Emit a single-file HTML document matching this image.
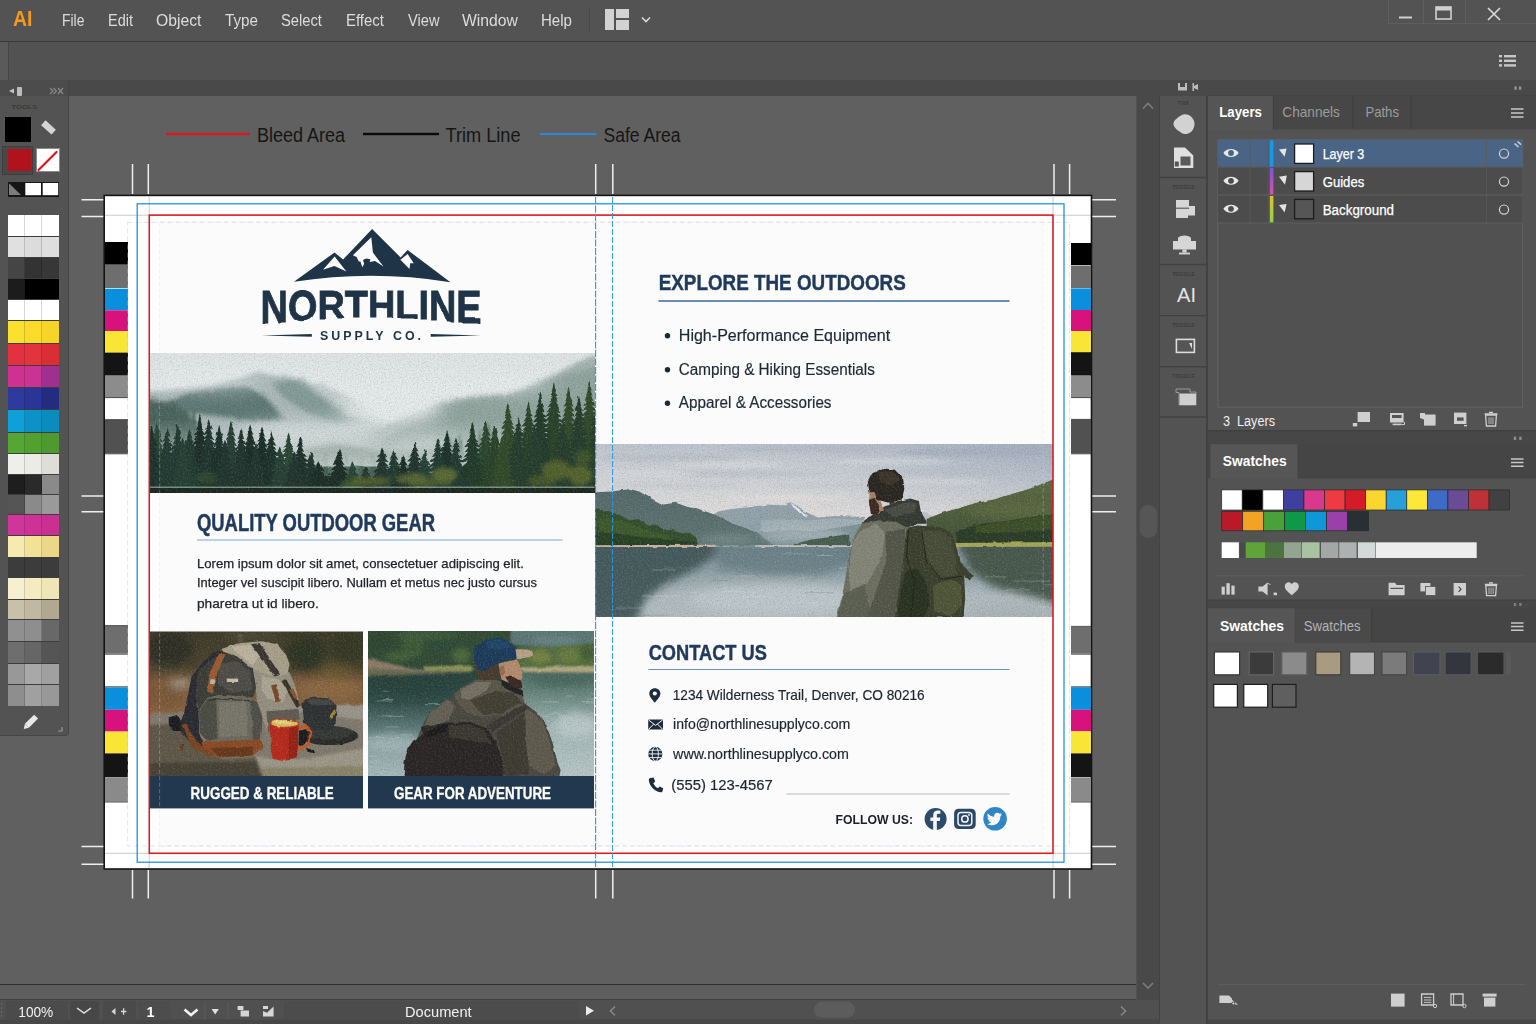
<!DOCTYPE html>
<html lang="en"><head><meta charset="utf-8"><title>Northline Supply Co. - Document</title>
<style>
html,body{margin:0;padding:0}
body{width:1536px;height:1024px;position:relative;overflow:hidden;background:#606060;font-family:"Liberation Sans",sans-serif}
.a{position:absolute}
.t{position:absolute;white-space:nowrap;line-height:1;transform-origin:0 50%}
svg{position:absolute;overflow:visible}
svg text{font-family:"Liberation Sans",sans-serif}
#menubar{left:0;top:0;width:1536px;height:41px;background:#535353}
#ctrlbar{left:0;top:41px;width:1536px;height:39px;background:#525252;border-top:1px solid #3a3a3a;box-sizing:border-box}
#tabstrip{left:0;top:80px;width:1536px;height:16px;background:#494949}
#canvas{left:69px;top:96px;width:1067px;height:888px;background:#606060;overflow:hidden}
#tools{left:0;top:80px;width:69px;height:656px;background:#535353;border-right:1px solid #464646;border-bottom:1px solid #454545;border-radius:0 0 4px 0;box-sizing:border-box}
#leftgutter{left:0;top:736px;width:69px;height:248px;background:#606060}
.sw{position:absolute}
</style></head><body>
<div id="menubar" class="a">
<span class="t" style="left:13.00px;top:8.08px;font-size:22px;color:#f7991c;font-weight:bold;transform:scaleX(0.8864);">AI</span>
<span class="t" style="left:62.00px;top:11.60px;font-size:16.3px;color:#ddd;transform:scaleX(0.8528);">File</span>
<span class="t" style="left:108.00px;top:11.60px;font-size:16.3px;color:#ddd;transform:scaleX(0.8901);">Edit</span>
<span class="t" style="left:156.00px;top:11.60px;font-size:16.3px;color:#ddd;transform:scaleX(0.9658);">Object</span>
<span class="t" style="left:225.00px;top:11.60px;font-size:16.3px;color:#ddd;transform:scaleX(0.9338);">Type</span>
<span class="t" style="left:281.00px;top:11.60px;font-size:16.3px;color:#ddd;transform:scaleX(0.9050);">Select</span>
<span class="t" style="left:346.00px;top:11.60px;font-size:16.3px;color:#ddd;transform:scaleX(0.9183);">Effect</span>
<span class="t" style="left:407.50px;top:11.60px;font-size:16.3px;color:#ddd;transform:scaleX(0.8991);">View</span>
<span class="t" style="left:462.00px;top:11.60px;font-size:16.3px;color:#ddd;transform:scaleX(0.9660);">Window</span>
<span class="t" style="left:541.00px;top:11.60px;font-size:16.3px;color:#ddd;transform:scaleX(0.9247);">Help</span>
<div class="a" style="left:589px;top:7px;width:1px;height:27px;background:#4a4a4a"></div>
<svg style="left:605px;top:9px" width="50" height="22" viewBox="0 0 50 22">
<rect x="0" y="0" width="9" height="21" fill="#d2d2d2"/><rect x="11" y="0" width="13" height="9" fill="#d2d2d2"/><rect x="11" y="11" width="13" height="10" fill="#d2d2d2"/>
<path d="M37 8.5 L41 12.5 L45 8.5" fill="none" stroke="#d8d8d8" stroke-width="1.6"/></svg>
<div class="a" style="left:1388px;top:0;width:148px;height:24px;border:1px solid #5e5e5e;border-top:none;border-right:none;box-sizing:border-box"></div>
<div class="a" style="left:1423px;top:0;width:1px;height:24px;background:#5e5e5e"></div>
<div class="a" style="left:1465px;top:0;width:1px;height:24px;background:#5e5e5e"></div>
<svg style="left:1388px;top:0" width="148" height="24" viewBox="0 0 148 24">
<rect x="11" y="16.5" width="13" height="2" fill="#d0d0d0"/>
<rect x="48" y="7" width="15" height="12" fill="none" stroke="#d0d0d0" stroke-width="1.6"/><rect x="48" y="7" width="15" height="3.5" fill="#d0d0d0"/>
<path d="M100 8 L112 20 M112 8 L100 20" stroke="#d8d8d8" stroke-width="1.7"/></svg>
</div>
<div id="ctrlbar" class="a">
<div class="a" style="left:0;top:0;width:8px;height:38px;background:#5a5a5a;border-right:1px solid #454545"></div>
<svg style="left:1499px;top:13px" width="18" height="12" viewBox="0 0 18 12"><g fill="#c8c8c8"><rect x="0" y="0" width="3" height="2.4"/><rect x="5" y="0" width="12" height="2.4"/><rect x="0" y="4.6" width="3" height="2.4"/><rect x="5" y="4.6" width="12" height="2.4"/><rect x="0" y="9.2" width="3" height="2.4"/><rect x="5" y="9.2" width="12" height="2.4"/></g></svg>
</div>
<div id="tabstrip" class="a"></div>
<div id="leftgutter" class="a"></div>
<div id="tools" class="a">
<div class="a" style="left:0;top:0;width:68px;height:16px;background:#4c4c4c"></div>
<svg style="left:0;top:0" width="69" height="40" viewBox="0 0 69 40">
<path d="M9 11 L14 8.5 L14 13.5 Z" fill="#c4c4c4"/><rect x="17" y="7" width="5" height="9" rx="1" fill="#bdbdbd"/>
<path d="M50 8 L53 11 L50 14 M53.5 8 L56.5 11 L53.5 14" stroke="#8a8a8a" stroke-width="1.2" fill="none"/><path d="M58 8 L63 14 M63 8 L58 14" stroke="#8a8a8a" stroke-width="1.2"/>
<text x="11.5" y="28.6" font-size="5.6" font-weight="bold" fill="#3b3b3b" textLength="26" lengthAdjust="spacingAndGlyphs">TOOLS</text>
</svg>
<div class="a" style="left:4.8px;top:37px;width:26.4px;height:25px;background:#000"></div>
<svg style="left:38px;top:38px" width="20" height="20" viewBox="0 0 20 20"><rect x="3" y="6" width="14" height="6.5" fill="#d4d4d4" transform="rotate(42 10 10)"/></svg>
<div class="a" style="left:2px;top:66px;width:31px;height:29px;background:#484848;border:1px solid #3e3e3e;box-sizing:border-box"></div>
<div class="a" style="left:7.5px;top:69.2px;width:23px;height:22px;background:#b0131e"></div>
<div class="a" style="left:35.5px;top:67.6px;width:24px;height:24.6px;background:#fff;border:1px solid #8a8a8a;box-sizing:border-box"></div>
<svg style="left:35.5px;top:67.6px" width="24" height="24.6" viewBox="0 0 24 24.6"><path d="M2.5 22 L20.5 4" stroke="#e0121e" stroke-width="2.2" stroke-linecap="round"/></svg>
<div class="a" style="left:8px;top:102.4px;width:51px;height:14.2px;background:#151515"></div>
<svg style="left:8px;top:102.4px" width="51" height="14.2" viewBox="0 0 51 14.2"><path d="M1 1.2 L1 13 L13 13 Z" fill="#7c7c7c"/><rect x="17.3" y="1" width="15.7" height="12.2" fill="#fff"/><rect x="34.7" y="1" width="15.5" height="12.2" fill="#fff"/></svg>
<div class="a" style="left:8px;top:135px;width:51px;height:491px;background:#3d3d3d"></div>
<div class="sw" style="left:8px;top:135px;width:17px;height:21px;background:#fff;box-shadow:inset -1px 0 rgba(0,0,0,.16)"></div><div class="sw" style="left:25px;top:135px;width:17px;height:21px;background:#fff;box-shadow:inset -1px 0 rgba(0,0,0,.16)"></div><div class="sw" style="left:42px;top:135px;width:17px;height:21px;background:#fff;"></div><div class="sw" style="left:8px;top:157px;width:17px;height:20px;background:#e0e0e0;box-shadow:inset -1px 0 rgba(0,0,0,.16)"></div><div class="sw" style="left:25px;top:157px;width:17px;height:20px;background:#dcdcdc;box-shadow:inset -1px 0 rgba(0,0,0,.16)"></div><div class="sw" style="left:42px;top:157px;width:17px;height:20px;background:#dedede;"></div><div class="sw" style="left:8px;top:178px;width:17px;height:20px;background:#454545;box-shadow:inset -1px 0 rgba(0,0,0,.16)"></div><div class="sw" style="left:25px;top:178px;width:17px;height:20px;background:#333;box-shadow:inset -1px 0 rgba(0,0,0,.16)"></div><div class="sw" style="left:42px;top:178px;width:17px;height:20px;background:#373737;"></div><div class="sw" style="left:8px;top:199px;width:17px;height:20px;background:#1c1c1c;box-shadow:inset -1px 0 rgba(0,0,0,.16)"></div><div class="sw" style="left:25px;top:199px;width:17px;height:20px;background:#000;box-shadow:inset -1px 0 rgba(0,0,0,.16)"></div><div class="sw" style="left:42px;top:199px;width:17px;height:20px;background:#000;"></div><div class="sw" style="left:8px;top:220px;width:17px;height:20px;background:#fff;box-shadow:inset -1px 0 rgba(0,0,0,.16)"></div><div class="sw" style="left:25px;top:220px;width:17px;height:20px;background:#fff;box-shadow:inset -1px 0 rgba(0,0,0,.16)"></div><div class="sw" style="left:42px;top:220px;width:17px;height:20px;background:#fff;"></div><div class="sw" style="left:8px;top:241px;width:17px;height:22px;background:#fbe12e;box-shadow:inset -1px 0 rgba(0,0,0,.16)"></div><div class="sw" style="left:25px;top:241px;width:17px;height:22px;background:#fbdc2a;box-shadow:inset -1px 0 rgba(0,0,0,.16)"></div><div class="sw" style="left:42px;top:241px;width:17px;height:22px;background:#f8d428;"></div><div class="sw" style="left:8px;top:264px;width:17px;height:21px;background:#e23140;box-shadow:inset -1px 0 rgba(0,0,0,.16)"></div><div class="sw" style="left:25px;top:264px;width:17px;height:21px;background:#e2343c;box-shadow:inset -1px 0 rgba(0,0,0,.16)"></div><div class="sw" style="left:42px;top:264px;width:17px;height:21px;background:#d92e34;"></div><div class="sw" style="left:8px;top:286px;width:17px;height:21px;background:#cf3190;box-shadow:inset -1px 0 rgba(0,0,0,.16)"></div><div class="sw" style="left:25px;top:286px;width:17px;height:21px;background:#c93492;box-shadow:inset -1px 0 rgba(0,0,0,.16)"></div><div class="sw" style="left:42px;top:286px;width:17px;height:21px;background:#a03090;"></div><div class="sw" style="left:8px;top:308px;width:17px;height:21px;background:#2f3a9e;box-shadow:inset -1px 0 rgba(0,0,0,.16)"></div><div class="sw" style="left:25px;top:308px;width:17px;height:21px;background:#2a3596;box-shadow:inset -1px 0 rgba(0,0,0,.16)"></div><div class="sw" style="left:42px;top:308px;width:17px;height:21px;background:#232c80;"></div><div class="sw" style="left:8px;top:330px;width:17px;height:22px;background:#0fa0d8;box-shadow:inset -1px 0 rgba(0,0,0,.16)"></div><div class="sw" style="left:25px;top:330px;width:17px;height:22px;background:#0d92c8;box-shadow:inset -1px 0 rgba(0,0,0,.16)"></div><div class="sw" style="left:42px;top:330px;width:17px;height:22px;background:#0c8cbc;"></div><div class="sw" style="left:8px;top:353px;width:17px;height:20px;background:#55a632;box-shadow:inset -1px 0 rgba(0,0,0,.16)"></div><div class="sw" style="left:25px;top:353px;width:17px;height:20px;background:#52a030;box-shadow:inset -1px 0 rgba(0,0,0,.16)"></div><div class="sw" style="left:42px;top:353px;width:17px;height:20px;background:#4e9a30;"></div><div class="sw" style="left:8px;top:374px;width:17px;height:20px;background:#eeeeea;box-shadow:inset -1px 0 rgba(0,0,0,.16)"></div><div class="sw" style="left:25px;top:374px;width:17px;height:20px;background:#ecece6;box-shadow:inset -1px 0 rgba(0,0,0,.16)"></div><div class="sw" style="left:42px;top:374px;width:17px;height:20px;background:#deded6;"></div><div class="sw" style="left:8px;top:395px;width:17px;height:19px;background:#1e1e1e;box-shadow:inset -1px 0 rgba(0,0,0,.16)"></div><div class="sw" style="left:25px;top:395px;width:17px;height:19px;background:#2a2a2a;box-shadow:inset -1px 0 rgba(0,0,0,.16)"></div><div class="sw" style="left:42px;top:395px;width:17px;height:19px;background:#8a8a8a;"></div><div class="sw" style="left:8px;top:415px;width:17px;height:19px;background:#555;box-shadow:inset -1px 0 rgba(0,0,0,.16)"></div><div class="sw" style="left:25px;top:415px;width:17px;height:19px;background:#8a8a8a;box-shadow:inset -1px 0 rgba(0,0,0,.16)"></div><div class="sw" style="left:42px;top:415px;width:17px;height:19px;background:#9a9a9a;"></div><div class="sw" style="left:8px;top:435px;width:17px;height:20px;background:#d0359a;box-shadow:inset -1px 0 rgba(0,0,0,.16)"></div><div class="sw" style="left:25px;top:435px;width:17px;height:20px;background:#cf3296;box-shadow:inset -1px 0 rgba(0,0,0,.16)"></div><div class="sw" style="left:42px;top:435px;width:17px;height:20px;background:#c93092;"></div><div class="sw" style="left:8px;top:456px;width:17px;height:21px;background:#f6eab0;box-shadow:inset -1px 0 rgba(0,0,0,.16)"></div><div class="sw" style="left:25px;top:456px;width:17px;height:21px;background:#f2e298;box-shadow:inset -1px 0 rgba(0,0,0,.16)"></div><div class="sw" style="left:42px;top:456px;width:17px;height:21px;background:#ead888;"></div><div class="sw" style="left:8px;top:478px;width:17px;height:19px;background:#3c3c3c;box-shadow:inset -1px 0 rgba(0,0,0,.16)"></div><div class="sw" style="left:25px;top:478px;width:17px;height:19px;background:#3c3c3c;box-shadow:inset -1px 0 rgba(0,0,0,.16)"></div><div class="sw" style="left:42px;top:478px;width:17px;height:19px;background:#3c3c3c;"></div><div class="sw" style="left:8px;top:498px;width:17px;height:21px;background:#f6f0d0;box-shadow:inset -1px 0 rgba(0,0,0,.16)"></div><div class="sw" style="left:25px;top:498px;width:17px;height:21px;background:#f4ecc0;box-shadow:inset -1px 0 rgba(0,0,0,.16)"></div><div class="sw" style="left:42px;top:498px;width:17px;height:21px;background:#efe6b8;"></div><div class="sw" style="left:8px;top:520px;width:17px;height:19px;background:#c8c0a8;box-shadow:inset -1px 0 rgba(0,0,0,.16)"></div><div class="sw" style="left:25px;top:520px;width:17px;height:19px;background:#c0b8a0;box-shadow:inset -1px 0 rgba(0,0,0,.16)"></div><div class="sw" style="left:42px;top:520px;width:17px;height:19px;background:#b0a890;"></div><div class="sw" style="left:8px;top:540px;width:17px;height:21px;background:#909090;box-shadow:inset -1px 0 rgba(0,0,0,.16)"></div><div class="sw" style="left:25px;top:540px;width:17px;height:21px;background:#8e8e8e;box-shadow:inset -1px 0 rgba(0,0,0,.16)"></div><div class="sw" style="left:42px;top:540px;width:17px;height:21px;background:#686868;"></div><div class="sw" style="left:8px;top:562px;width:17px;height:21px;background:#6e6e6e;box-shadow:inset -1px 0 rgba(0,0,0,.16)"></div><div class="sw" style="left:25px;top:562px;width:17px;height:21px;background:#666;box-shadow:inset -1px 0 rgba(0,0,0,.16)"></div><div class="sw" style="left:42px;top:562px;width:17px;height:21px;background:#555;"></div><div class="sw" style="left:8px;top:584px;width:17px;height:20px;background:#989898;box-shadow:inset -1px 0 rgba(0,0,0,.16)"></div><div class="sw" style="left:25px;top:584px;width:17px;height:20px;background:#a8a8a8;box-shadow:inset -1px 0 rgba(0,0,0,.16)"></div><div class="sw" style="left:42px;top:584px;width:17px;height:20px;background:#a0a0a0;"></div><div class="sw" style="left:8px;top:605px;width:17px;height:21px;background:#8e8e8e;box-shadow:inset -1px 0 rgba(0,0,0,.16)"></div><div class="sw" style="left:25px;top:605px;width:17px;height:21px;background:#a0a0a0;box-shadow:inset -1px 0 rgba(0,0,0,.16)"></div><div class="sw" style="left:42px;top:605px;width:17px;height:21px;background:#989898;"></div>
<svg style="left:22px;top:630px" width="46" height="24" viewBox="0 0 46 24"><g transform="rotate(-45 10 11)"><rect x="3" y="8" width="13" height="5.6" fill="#e8e8e8"/><path d="M3 8 L-1.5 10.8 L3 13.6 Z" fill="#e8e8e8"/></g><path d="M40 17 L40 21 L36 21" stroke="#9a9a9a" stroke-width="1.2" fill="none"/></svg>
</div>
<div id="canvas" class="a">
<svg style="left:-69px;top:-96px" width="1536" height="1024" viewBox="0 0 1536 1024">
<defs>
<clipPath id="cpF"><rect x="150" y="353" width="445" height="140"/></clipPath>
<clipPath id="cpL"><rect x="595.5" y="444.5" width="457" height="172.5"/></clipPath>
<clipPath id="cpB"><rect x="150" y="631.5" width="213" height="145"/></clipPath>
<clipPath id="cpM"><rect x="368" y="631.5" width="226" height="145"/></clipPath>
<filter id="organic" filterUnits="userSpaceOnUse" x="140" y="340" width="930" height="450" color-interpolation-filters="sRGB">
<feTurbulence type="fractalNoise" baseFrequency="0.11" numOctaves="2" seed="4" result="t"/>
<feDisplacementMap in="SourceGraphic" in2="t" scale="3" xChannelSelector="R" yChannelSelector="G" result="d"/>
<feTurbulence type="fractalNoise" baseFrequency="0.75" numOctaves="2" seed="9" result="g"/>
<feColorMatrix in="g" type="matrix" values="0 0 0 0 0  0 0 0 0 0  0 0 0 0 0  .2 .2 0 0 -.178" result="ga"/>
<feComposite in="ga" in2="d" operator="in" result="gd"/>
<feTurbulence type="fractalNoise" baseFrequency="0.6" numOctaves="2" seed="23" result="g2"/>
<feColorMatrix in="g2" type="matrix" values="0 0 0 0 1  0 0 0 0 1  0 0 0 0 1  .2 .2 0 0 -.186" result="gb"/>
<feComposite in="gb" in2="d" operator="in" result="gl"/>
<feMerge><feMergeNode in="d"/><feMergeNode in="gd"/><feMergeNode in="gl"/></feMerge>
</filter>
<filter id="b05" x="-5%" y="-5%" width="110%" height="110%"><feGaussianBlur stdDeviation=".55"/></filter>
<filter id="b1" x="-10%" y="-10%" width="120%" height="120%"><feGaussianBlur stdDeviation="1"/></filter>
<filter id="b2" x="-10%" y="-10%" width="120%" height="120%"><feGaussianBlur stdDeviation="2.2"/></filter>
<filter id="b4" x="-20%" y="-20%" width="140%" height="140%"><feGaussianBlur stdDeviation="4.5"/></filter>
<filter id="b8" x="-30%" y="-30%" width="160%" height="160%"><feGaussianBlur stdDeviation="9"/></filter>
</defs>
<!-- legend -->
<g id="legend">
<rect x="166" y="132.8" width="84" height="2.4" fill="#d61a22"/>
<rect x="363" y="132.8" width="76" height="2.4" fill="#0a0a0a"/>
<rect x="540" y="133" width="56.5" height="2" fill="#2a86d8"/>
<text x="257.00" y="141.50" font-size="19.5" fill="#161616" textLength="88.00" lengthAdjust="spacingAndGlyphs" >Bleed Area</text>
<text x="445.50" y="141.50" font-size="19.5" fill="#161616" textLength="75.00" lengthAdjust="spacingAndGlyphs" >Trim Line</text>
<text x="603.50" y="141.50" font-size="19.5" fill="#161616" textLength="77.00" lengthAdjust="spacingAndGlyphs" >Safe Area</text>
</g>
<!-- crop marks -->
<g id="cropmarks" stroke="#eeeeee" stroke-width="1.5">
<path d="M132.5 164V194 M148.3 164V194 M595.7 164V194 M612.8 164V194 M1054 164V194 M1069.6 164V194"/>
<path d="M132.5 870V898.5 M148.3 870V898.5 M595.7 870V898.5 M612.8 870V898.5 M1054 870V898.5 M1069.6 870V898.5"/>
<path d="M81.5 199.8H104 M81.5 216.5H104 M81.5 496H104 M81.5 511.7H104 M81.5 846.5H104 M81.5 864.3H104"/>
<path d="M1092 199.8H1116 M1092 216.5H1116 M1092 496H1116 M1092 511.7H1116 M1092 846.5H1116 M1092 864.3H1116"/>
</g>
<!-- artboard -->
<rect x="104" y="195" width="988" height="874" fill="none"/>
<rect x="104.2" y="195.4" width="987.3" height="673.6" fill="#ffffff" stroke="#141414" stroke-width="1.6"/>
<rect x="128" y="222" width="942" height="624" fill="#fefefe"/>
<rect x="160" y="222.5" width="883" height="623.5" fill="#fbfbfb"/>
<!-- colour bars -->
<g id="barL">
<rect x="105" y="242.0" width="23" height="22.0" fill="#000"/><rect x="105" y="265.0" width="23" height="23.0" fill="#6e6e6e"/><rect x="105" y="288.7" width="23" height="21.6" fill="#0a8fdc"/><rect x="105" y="310.3" width="23" height="20.7" fill="#d8127c"/><rect x="105" y="331.0" width="23" height="21.6" fill="#f9e534"/><rect x="105" y="352.6" width="23" height="23.0" fill="#141414"/><rect x="105" y="376.0" width="23" height="21.4" fill="#8c8c8c"/><rect x="105" y="420.0" width="23" height="33.4" fill="#515151"/><rect x="105" y="626.0" width="23" height="27.6" fill="#6e6e6e"/><rect x="105" y="687.4" width="23" height="22.4" fill="#0a8fdc"/><rect x="105" y="709.8" width="23" height="21.8" fill="#d8127c"/><rect x="105" y="731.6" width="23" height="21.8" fill="#f9e534"/><rect x="105" y="753.4" width="23" height="24.0" fill="#141414"/><rect x="105" y="777.8" width="23" height="23.8" fill="#8a8a8a"/>
<path d="M105 264.5H128 M105 397.6H128 M105 419.6H128 M105 453.8H128 M105 625.6H128 M105 654.2H128 M105 686.8H128 M105 802H128" stroke="#222" stroke-width=".8"/>
</g>
<g id="barR">
<rect x="1071" y="243.0" width="20" height="22.0" fill="#000"/><rect x="1071" y="265.5" width="20" height="22.5" fill="#6e6e6e"/><rect x="1071" y="288.4" width="20" height="21.6" fill="#0a8fdc"/><rect x="1071" y="310.0" width="20" height="21.0" fill="#d8127c"/><rect x="1071" y="331.0" width="20" height="21.2" fill="#f9e534"/><rect x="1071" y="352.2" width="20" height="23.4" fill="#141414"/><rect x="1071" y="376.0" width="20" height="21.4" fill="#8c8c8c"/><rect x="1071" y="419.7" width="20" height="33.7" fill="#515151"/><rect x="1071" y="627.0" width="20" height="26.6" fill="#6e6e6e"/><rect x="1071" y="687.3" width="20" height="22.5" fill="#0a8fdc"/><rect x="1071" y="709.8" width="20" height="21.6" fill="#d8127c"/><rect x="1071" y="731.4" width="20" height="22.0" fill="#f9e534"/><rect x="1071" y="753.4" width="20" height="23.8" fill="#141414"/><rect x="1071" y="777.6" width="20" height="24.0" fill="#8a8a8a"/>
<path d="M1071 397.6H1091 M1071 419.4H1091 M1071 453.8H1091 M1071 626.4H1091 M1071 654.2H1091 M1071 686.8H1091 M1071 802H1091" stroke="#222" stroke-width=".8"/>
</g>
<g id="photos">
<g clip-path="url(#cpF)"><g filter="url(#organic)">
<defs><linearGradient id="fsky" x1="0" y1="0" x2="0" y2="1"><stop offset="0" stop-color="#dfe4e5"/><stop offset=".3" stop-color="#e6ebeb"/><stop offset=".62" stop-color="#d3dbda"/><stop offset="1" stop-color="#9fb0aa"/></linearGradient><linearGradient id="fhz" x1="0" y1="0" x2="0" y2="1"><stop offset="0" stop-color="#dfe6e5" stop-opacity="0"/><stop offset="1" stop-color="#dfe6e5" stop-opacity=".75"/></linearGradient></defs>
<rect x="142" y="345" width="461" height="157" fill="url(#fsky)"/>
<g filter="url(#b2)">
<path d="M305.0 382.1 L322.7 385.0 L346.4 395.4 L370.1 411.7 L382.0 419.1 L387.9 445.7 L310.9 445.7Z" fill="#c3cecd"/>
<path d="M139.1 392.4 L174.6 389.5 L213.1 385.0 L242.7 377.6 L257.6 372.3 L269.4 374.7 L284.2 377.0 L302.0 377.6 L319.8 392.4 L340.5 405.8 L364.2 417.6 L379.0 425.6 L382.0 472.4 L139.1 472.4Z" fill="#aab9b8"/>
<path d="M367.2 432.4 L390.9 422.1 L411.6 414.6 L441.2 401.9 L459.0 398.4 L476.8 395.4 L512.3 392.4 L539.0 381.2 L559.7 371.7 L580.4 361.3 L601.2 352.4 L601.2 472.4 L367.2 472.4Z" fill="#a3b3b0"/>
<path d="M165.7 401.3 L189.4 392.4 L219.1 388.0 L245.7 386.5 L260.5 392.4 L272.4 404.3 L284.2 419.1 L257.6 422.6 L219.1 416.7 L180.5 412.6Z" fill="#587471" opacity=".95"/>
<path d="M272.4 383.5 L293.1 379.1 L310.9 389.5 L334.6 407.2 L364.2 422.6 L334.6 423.5 L305.0 411.7 L284.2 398.4Z" fill="#7f9693" opacity=".85"/>
<path d="M382.0 439.8 L411.6 423.5 L444.2 406.6 L476.8 398.9 L515.3 395.4 L541.9 383.5 L565.6 374.7 L601.2 365.8 L601.2 448.7 L382.0 457.6Z" fill="#8ea29c" opacity=".85"/>
<path d="M139.1 396.9 L162.8 400.7 L177.6 406.6 L192.4 416.7 L204.2 436.9 L139.1 445.7Z" fill="#4c665e"/>
<path d="M305.0 448.7 L334.6 443.4 L358.3 447.2 L382.0 451.7 L411.6 450.2 L441.2 447.2 L459.0 438.3 L459.0 490.2 L305.0 490.2Z" fill="#61796d" opacity=".9"/>
</g>
<g filter="url(#b8)" fill="#e8eded">
<ellipse cx="390.9" cy="408.7" rx="52" ry="14" opacity=".9"/>
<ellipse cx="310.9" cy="432.4" rx="75" ry="9" opacity=".8"/>
<ellipse cx="210.2" cy="382.1" rx="55" ry="8" opacity=".55"/>
<ellipse cx="515.3" cy="385.0" rx="40" ry="7" opacity=".5"/>
<ellipse cx="426.4" cy="445.7" rx="40" ry="8" opacity=".55"/>
</g>
<g filter="url(#b1)" fill="#47635a">
<path d="M153.9 404.3 L153.1 409.3 L153.5 408.6 L152.4 414.4 L153.1 413.6 L151.6 419.4 L152.7 418.7 L151.4 424.5 L152.4 423.7 L149.9 429.5 L152.0 428.8 L150.2 434.6 L152.3 433.8 L149.6 439.7 L151.9 438.9 L148.7 444.7 L151.1 443.9 L148.0 449.8 L151.0 449.0 L146.4 454.8 L150.3 454.1 L147.2 459.9 L150.9 459.1 L145.6 464.9 L150.4 464.2 L144.5 470.0 L149.5 469.2 L144.0 475.0 L149.8 474.3 L145.7 480.1 L149.3 479.3 L145.2 485.1 L149.5 484.4 L144.6 490.2 L149.4 489.4 L148.5 490.2 L159.2 490.2 L158.0 489.4 L163.1 490.2 L159.0 484.4 L165.2 485.1 L157.9 479.3 L164.0 480.1 L157.9 474.3 L164.0 475.0 L157.3 469.2 L160.9 470.0 L157.3 464.2 L162.3 464.9 L156.7 459.1 L160.5 459.9 L157.2 454.1 L161.0 454.8 L156.4 449.0 L159.7 449.8 L156.5 443.9 L159.2 444.7 L156.1 438.9 L157.9 439.7 L155.5 433.8 L158.0 434.6 L155.6 428.8 L157.5 429.5 L155.0 423.7 L156.9 424.5 L154.8 418.7 L155.8 419.4 L154.6 413.6 L155.3 414.4 L154.3 408.6 L154.8 409.3Z"/>
<path d="M162.8 407.2 L161.8 412.4 L162.4 411.6 L161.3 417.6 L162.0 416.8 L160.7 422.8 L161.7 422.0 L159.3 428.0 L161.2 427.2 L159.4 433.2 L161.1 432.4 L159.0 438.3 L160.4 437.6 L157.4 443.5 L160.6 442.7 L157.8 448.7 L160.1 447.9 L156.8 453.9 L159.9 453.1 L155.8 459.1 L159.1 458.3 L154.4 464.3 L158.9 463.5 L154.1 469.4 L158.4 468.7 L153.1 474.6 L158.5 473.9 L154.8 479.8 L157.7 479.0 L153.6 485.0 L157.6 484.2 L153.3 490.2 L157.5 489.4 L157.4 490.2 L168.1 490.2 L167.2 489.4 L171.9 490.2 L167.1 484.2 L173.0 485.0 L167.4 479.0 L171.3 479.8 L166.3 473.9 L171.3 474.6 L167.2 468.7 L170.1 469.4 L165.9 463.5 L169.7 464.3 L165.6 458.3 L169.0 459.1 L165.7 453.1 L169.9 453.9 L165.5 447.9 L168.0 448.7 L164.7 442.7 L167.5 443.5 L164.6 437.6 L166.7 438.3 L164.6 432.4 L166.8 433.2 L164.4 427.2 L165.6 428.0 L163.8 422.0 L164.9 422.8 L163.6 416.8 L164.2 417.6 L163.2 411.6 L163.7 412.4Z"/>
<path d="M173.1 402.8 L172.3 407.9 L172.7 407.2 L171.4 413.1 L172.5 412.3 L171.0 418.2 L172.3 417.4 L170.2 423.4 L172.0 422.6 L169.2 428.5 L171.4 427.7 L169.5 433.6 L171.5 432.9 L168.1 438.8 L170.6 438.0 L167.8 443.9 L170.4 443.1 L168.0 449.1 L170.3 448.3 L166.2 454.2 L169.9 453.4 L166.4 459.3 L169.6 458.6 L165.7 464.5 L169.2 463.7 L164.6 469.6 L169.4 468.8 L165.4 474.8 L168.8 474.0 L163.1 479.9 L168.9 479.1 L163.4 485.0 L167.9 484.3 L164.1 490.2 L168.1 489.4 L167.8 490.2 L178.5 490.2 L177.6 489.4 L183.6 490.2 L178.2 484.3 L181.8 485.0 L177.7 479.1 L183.2 479.9 L177.8 474.0 L183.2 474.8 L177.1 468.8 L181.6 469.6 L176.8 463.7 L181.6 464.5 L176.9 458.6 L181.1 459.3 L176.6 453.4 L180.2 454.2 L176.3 448.3 L179.5 449.1 L176.1 443.1 L178.2 443.9 L175.5 438.0 L177.2 438.8 L175.3 432.9 L176.7 433.6 L174.8 427.7 L176.8 428.5 L174.7 422.6 L175.9 423.4 L174.1 417.4 L175.1 418.2 L173.8 412.3 L174.4 413.1 L173.5 407.2 L174.0 407.9Z"/>
<path d="M183.5 411.7 L182.5 416.9 L183.1 416.1 L181.9 422.2 L182.8 421.4 L181.3 427.4 L182.5 426.6 L180.4 432.6 L181.8 431.8 L180.0 437.8 L181.7 437.1 L178.4 443.1 L181.4 442.3 L178.8 448.3 L181.0 447.5 L177.2 453.5 L180.3 452.8 L177.0 458.8 L180.7 458.0 L176.0 464.0 L180.1 463.2 L174.4 469.2 L179.9 468.5 L174.0 474.5 L180.2 473.7 L174.8 479.7 L178.7 478.9 L173.8 484.9 L179.7 484.2 L174.1 490.2 L179.4 489.4 L178.2 490.2 L188.9 490.2 L188.3 489.4 L194.4 490.2 L187.7 484.2 L194.3 484.9 L187.3 478.9 L191.4 479.7 L187.6 473.7 L192.6 474.5 L186.6 468.5 L190.4 469.2 L187.3 463.2 L190.4 464.0 L186.5 458.0 L189.6 458.8 L186.0 452.8 L189.1 453.5 L186.3 447.5 L189.3 448.3 L185.5 442.3 L188.2 443.1 L185.6 437.1 L187.8 437.8 L185.1 431.8 L186.5 432.6 L184.7 426.6 L186.3 427.4 L184.4 421.4 L185.1 422.2 L184.0 416.1 L184.5 416.9Z"/>
<path d="M193.9 407.2 L193.0 412.4 L193.4 411.6 L192.2 417.6 L193.2 416.8 L191.9 422.8 L192.8 422.0 L191.1 428.0 L192.5 427.2 L190.1 433.2 L192.0 432.4 L189.0 438.3 L192.1 437.6 L189.4 443.5 L191.6 442.7 L188.5 448.7 L191.2 447.9 L186.8 453.9 L191.0 453.1 L186.6 459.1 L190.3 458.3 L187.0 464.3 L189.9 463.5 L185.7 469.4 L189.7 468.7 L184.3 474.6 L190.0 473.9 L184.4 479.8 L189.1 479.0 L183.1 485.0 L190.0 484.2 L183.9 490.2 L188.5 489.4 L188.5 490.2 L199.2 490.2 L198.2 489.4 L203.2 490.2 L198.0 484.2 L204.7 485.0 L197.5 479.0 L203.1 479.8 L197.9 473.9 L201.5 474.6 L198.2 468.7 L201.5 469.4 L198.0 463.5 L202.4 464.3 L197.3 458.3 L201.0 459.1 L196.5 453.1 L200.4 453.9 L196.8 447.9 L200.1 448.7 L196.6 442.7 L199.0 443.5 L196.1 437.6 L198.8 438.3 L195.8 432.4 L197.4 433.2 L195.3 427.2 L197.1 428.0 L194.8 422.0 L196.3 422.8 L194.5 416.8 L195.5 417.6 L194.3 411.6 L194.8 412.4Z"/>
<path d="M325.7 451.7 L323.9 457.2 L324.8 456.3 L321.8 462.7 L324.1 461.8 L321.2 468.2 L323.4 467.4 L319.1 473.7 L322.7 472.9 L318.4 479.2 L322.2 478.4 L317.4 484.7 L320.9 483.9 L315.0 490.2 L321.3 489.4 L320.3 490.2 L331.0 490.2 L330.6 489.4 L336.3 490.2 L330.0 483.9 L336.1 484.7 L329.8 478.4 L334.2 479.2 L328.7 472.9 L332.7 473.7 L328.2 467.4 L330.3 468.2 L327.0 461.8 L329.5 462.7 L326.6 456.3 L327.7 457.2Z"/>
<path d="M346.4 453.2 L344.5 458.4 L345.7 457.7 L343.1 463.7 L344.7 462.9 L341.3 469.0 L344.5 468.2 L339.2 474.3 L343.0 473.5 L339.5 479.6 L342.9 478.8 L337.4 484.9 L342.4 484.1 L334.6 490.2 L342.2 489.4 L341.1 490.2 L351.8 490.2 L350.5 489.4 L357.8 490.2 L350.9 484.1 L354.7 484.9 L350.6 478.8 L354.9 479.6 L349.4 473.5 L352.3 474.3 L348.6 468.2 L351.4 469.0 L348.0 462.9 L349.9 463.7 L347.3 457.7 L348.5 458.4Z"/>
<path d="M361.2 456.1 L359.3 461.8 L360.4 460.9 L357.5 467.5 L359.3 466.6 L356.2 473.1 L358.6 472.3 L353.9 478.8 L357.9 478.0 L352.3 484.5 L357.6 483.7 L350.3 490.2 L356.3 489.3 L355.9 490.2 L366.6 490.2 L366.3 489.3 L372.8 490.2 L365.6 483.7 L369.3 484.5 L364.5 478.0 L368.2 478.8 L363.6 472.3 L366.4 473.1 L363.2 466.6 L364.7 467.5 L362.1 460.9 L363.4 461.8Z"/>
<path d="M373.1 452.3 L371.1 457.7 L372.3 456.9 L369.3 463.1 L371.6 462.3 L368.6 468.5 L370.4 467.7 L367.2 473.9 L369.9 473.1 L364.6 479.3 L369.6 478.5 L364.2 484.8 L368.5 484.0 L362.0 490.2 L367.4 489.4 L367.7 490.2 L378.4 490.2 L377.3 489.4 L385.0 490.2 L376.9 484.0 L380.9 484.8 L376.2 478.5 L381.5 479.3 L375.6 473.1 L379.0 473.9 L375.1 467.7 L378.5 468.5 L374.9 462.3 L376.3 463.1 L374.0 456.9 L375.0 457.7Z"/>
<path d="M450.1 436.9 L448.8 442.2 L449.4 441.4 L447.9 447.5 L449.1 446.7 L446.5 452.9 L448.4 452.1 L445.9 458.2 L448.2 457.4 L443.8 463.5 L447.9 462.7 L443.5 468.9 L446.7 468.1 L442.5 474.2 L446.6 473.4 L441.0 479.5 L445.6 478.7 L439.9 484.8 L445.8 484.0 L439.6 490.2 L446.1 489.4 L444.7 490.2 L455.4 490.2 L455.5 489.4 L461.8 490.2 L454.0 484.0 L458.8 484.8 L454.0 478.7 L457.9 479.5 L453.0 473.4 L457.9 474.2 L453.2 468.1 L456.4 468.9 L453.2 462.7 L455.0 463.5 L452.6 457.4 L455.2 458.2 L451.5 452.1 L453.7 452.9 L451.1 446.7 L452.3 447.5 L450.8 441.4 L451.4 442.2Z"/>
<path d="M460.5 433.9 L459.2 439.0 L459.8 438.2 L458.1 444.1 L459.4 443.4 L457.4 449.2 L458.7 448.5 L455.8 454.4 L458.6 453.6 L455.0 459.5 L457.8 458.7 L454.0 464.6 L458.1 463.8 L454.5 469.7 L457.4 468.9 L453.2 474.8 L456.2 474.1 L451.3 479.9 L456.3 479.2 L449.4 485.1 L455.7 484.3 L448.5 490.2 L456.4 489.4 L455.1 490.2 L465.8 490.2 L465.8 489.4 L471.3 490.2 L465.4 484.3 L470.7 485.1 L464.4 479.2 L469.3 479.9 L463.9 474.1 L468.7 474.8 L463.9 468.9 L467.7 469.7 L463.3 463.8 L466.3 464.6 L462.8 458.7 L466.0 459.5 L462.7 453.6 L465.2 454.4 L462.1 448.5 L464.0 449.2 L461.6 443.4 L463.0 444.1 L461.0 438.2 L461.7 439.0Z"/>
<path d="M479.7 428.0 L478.7 433.2 L479.2 432.4 L477.7 438.3 L478.9 437.6 L476.7 443.5 L478.3 442.7 L475.2 448.7 L477.8 447.9 L474.8 453.9 L477.3 453.1 L474.7 459.1 L477.1 458.3 L473.0 464.3 L477.2 463.5 L472.4 469.4 L476.2 468.7 L471.2 474.6 L475.8 473.9 L471.4 479.8 L476.3 479.0 L471.0 485.0 L474.8 484.2 L468.5 490.2 L475.6 489.4 L474.4 490.2 L485.1 490.2 L485.4 489.4 L491.7 490.2 L484.9 484.2 L489.1 485.0 L483.2 479.0 L487.9 479.8 L483.8 473.9 L487.3 474.6 L482.9 468.7 L486.7 469.4 L482.7 463.5 L487.0 464.3 L482.3 458.3 L484.8 459.1 L482.3 453.1 L483.8 453.9 L481.3 447.9 L484.0 448.7 L481.2 442.7 L483.1 443.5 L480.8 437.6 L481.7 438.3 L480.2 432.4 L480.7 433.2Z"/>
<path d="M488.6 422.1 L487.7 427.3 L488.0 426.5 L486.4 432.5 L487.8 431.7 L485.6 437.8 L487.3 437.0 L484.9 443.0 L487.1 442.2 L484.6 448.3 L486.9 447.5 L483.5 453.5 L486.0 452.7 L482.4 458.7 L485.9 458.0 L480.8 464.0 L484.9 463.2 L481.9 469.2 L484.6 468.4 L480.7 474.5 L485.0 473.7 L479.3 479.7 L484.2 478.9 L479.6 484.9 L483.2 484.2 L479.6 490.2 L484.5 489.4 L483.2 490.2 L494.0 490.2 L493.4 489.4 L498.4 490.2 L493.8 484.2 L499.6 484.9 L492.3 478.9 L498.3 479.7 L492.6 473.7 L497.3 474.5 L492.3 468.4 L496.8 469.2 L491.5 463.2 L495.8 464.0 L491.4 458.0 L495.1 458.7 L490.8 452.7 L493.8 453.5 L490.4 447.5 L493.1 448.3 L490.3 442.2 L492.4 443.0 L490.1 437.0 L491.8 437.8 L489.7 431.7 L490.6 432.5 L489.1 426.5 L489.6 427.3Z"/>
</g>
<rect x="150" y="419.1" width="445" height="47.4" fill="url(#fhz)"/>
<g filter="url(#b05)">
<path d="M145.0 457.6 L204.2 448.7 L269.4 457.6 L316.8 475.4 L352.3 480.7 L441.2 478.3 L470.8 463.5 L530.1 448.7 L598.2 439.8 L598.2 496.1 L145.0 496.1Z" fill="#20332a"/>
<path d="M589.3 380.6 L587.9 385.7 L588.8 384.9 L587.1 390.8 L588.1 390.0 L585.8 395.9 L587.6 395.1 L584.3 400.9 L586.8 400.2 L583.1 406.0 L586.5 405.3 L582.7 411.1 L586.4 410.4 L581.2 416.2 L585.0 415.4 L579.9 421.3 L584.6 420.5 L580.8 426.4 L584.1 425.6 L578.4 431.5 L584.3 430.7 L576.7 436.6 L584.7 435.8 L578.3 441.7 L583.8 440.9 L576.7 446.7 L583.8 446.0 L575.4 451.8 L583.5 451.1 L572.0 456.9 L581.0 456.2 L571.5 462.0 L582.2 461.2 L569.9 467.1 L580.1 466.3 L571.9 472.2 L581.2 471.4 L572.0 477.3 L580.2 476.5 L567.4 482.4 L579.8 481.6 L566.1 487.5 L580.3 486.7 L567.3 492.5 L578.9 491.8 L578.2 492.5 L600.4 492.5 L600.0 491.8 L614.1 492.5 L599.1 486.7 L607.2 487.5 L599.5 481.6 L607.3 482.4 L598.4 476.5 L610.0 477.3 L597.5 471.4 L606.9 472.2 L597.0 466.3 L605.3 467.1 L596.7 461.2 L604.7 462.0 L596.4 456.2 L606.6 456.9 L596.3 451.1 L604.7 451.8 L596.2 446.0 L602.3 446.7 L595.6 440.9 L602.8 441.7 L595.1 435.8 L600.0 436.6 L593.9 430.7 L600.6 431.5 L593.2 425.6 L597.8 426.4 L593.2 420.5 L597.9 421.3 L593.0 415.4 L596.7 416.2 L592.3 410.4 L596.7 411.1 L591.7 405.3 L595.5 406.0 L591.2 400.2 L593.4 400.9 L590.9 395.1 L592.6 395.9 L590.5 390.0 L591.9 390.8 L589.8 384.9 L590.7 385.7Z" fill="#314a2c"/>
<path d="M553.8 382.1 L552.6 387.1 L553.1 386.3 L551.6 392.1 L552.5 391.4 L550.0 397.1 L552.3 396.4 L549.5 402.2 L551.8 401.4 L547.6 407.2 L551.2 406.4 L546.7 412.2 L550.6 411.4 L545.6 417.2 L549.6 416.5 L544.6 422.2 L549.2 421.5 L543.0 427.3 L548.5 426.5 L542.5 432.3 L548.2 431.5 L543.4 437.3 L547.9 436.6 L542.5 442.3 L548.5 441.6 L538.4 447.4 L548.5 446.6 L538.7 452.4 L546.4 451.6 L538.6 457.4 L546.4 456.6 L539.4 462.4 L547.0 461.7 L535.5 467.4 L545.5 466.7 L536.9 472.5 L546.3 471.7 L534.5 477.5 L543.9 476.7 L531.6 482.5 L543.1 481.8 L530.2 487.5 L544.1 486.8 L529.3 492.5 L542.5 491.8 L542.7 492.5 L564.8 492.5 L564.0 491.8 L574.6 492.5 L561.9 486.8 L572.8 487.5 L563.2 481.8 L572.7 482.5 L561.9 476.7 L572.6 477.5 L561.6 471.7 L573.2 472.5 L560.9 466.7 L569.5 467.4 L560.6 461.7 L568.6 462.4 L559.7 456.6 L571.0 457.4 L559.4 451.6 L566.8 452.4 L559.2 446.6 L566.5 447.4 L559.2 441.6 L566.0 442.3 L558.9 436.6 L567.0 437.3 L558.6 431.5 L564.2 432.3 L558.3 426.5 L563.8 427.3 L558.3 421.5 L563.3 422.2 L557.8 416.5 L561.3 417.2 L557.2 411.4 L560.6 412.2 L556.9 406.4 L559.2 407.2 L556.0 401.4 L558.8 402.2 L555.5 396.4 L557.6 397.1 L554.8 391.4 L556.6 392.1 L554.3 386.3 L555.2 387.1Z" fill="#29422b"/>
<path d="M568.6 386.5 L567.1 391.6 L567.9 390.8 L565.7 396.6 L567.2 395.8 L565.2 401.7 L566.9 400.9 L563.4 406.7 L566.6 405.9 L563.4 411.8 L565.6 411.0 L562.6 416.8 L565.3 416.0 L559.7 421.9 L565.3 421.1 L559.3 426.9 L564.4 426.1 L559.9 432.0 L563.5 431.2 L559.2 437.0 L564.0 436.2 L555.7 442.1 L563.1 441.3 L555.7 447.1 L561.6 446.3 L555.1 452.2 L562.0 451.4 L555.7 457.2 L562.7 456.4 L552.0 462.3 L560.6 461.5 L552.2 467.3 L559.7 466.5 L552.1 472.4 L561.5 471.6 L548.2 477.4 L559.2 476.6 L548.4 482.5 L558.0 481.7 L546.7 487.5 L558.9 486.7 L548.1 492.5 L560.0 491.8 L557.7 492.5 L579.4 492.5 L577.7 491.8 L588.7 492.5 L577.0 486.7 L586.4 487.5 L579.2 481.7 L589.5 482.5 L576.2 476.6 L589.3 477.4 L577.9 471.6 L587.6 472.4 L576.3 466.5 L586.3 467.3 L574.9 461.5 L585.6 462.3 L575.9 456.4 L581.8 457.2 L575.4 451.4 L584.4 452.2 L574.2 446.3 L583.2 447.1 L574.0 441.3 L578.8 442.1 L574.0 436.2 L578.5 437.0 L573.2 431.2 L578.6 432.0 L573.1 426.1 L578.5 426.9 L572.1 421.1 L575.6 421.9 L571.5 416.0 L574.8 416.8 L571.3 411.0 L574.6 411.8 L571.1 405.9 L573.9 406.7 L570.3 400.9 L572.7 401.7 L569.8 395.8 L571.5 396.6 L569.3 390.8 L569.8 391.6Z" fill="#314a2c"/>
<path d="M598.2 389.5 L596.7 394.6 L597.6 393.9 L595.8 399.8 L597.1 399.0 L594.7 404.9 L596.5 404.2 L593.9 410.1 L596.1 409.3 L592.3 415.2 L595.8 414.5 L591.1 420.4 L594.7 419.6 L590.3 425.5 L594.6 424.8 L589.2 430.7 L593.6 429.9 L587.4 435.9 L593.2 435.1 L587.4 441.0 L592.6 440.2 L585.9 446.2 L591.8 445.4 L586.3 451.3 L591.4 450.5 L584.5 456.5 L591.5 455.7 L580.7 461.6 L591.0 460.9 L583.4 466.8 L589.4 466.0 L583.1 471.9 L590.9 471.2 L580.9 477.1 L588.4 476.3 L581.2 482.2 L587.7 481.5 L577.8 487.4 L588.6 486.6 L574.6 492.5 L586.6 491.8 L587.4 492.5 L608.9 492.5 L608.4 491.8 L621.2 492.5 L606.8 486.6 L618.7 487.4 L608.5 481.5 L615.3 482.2 L606.6 476.3 L615.6 477.1 L606.8 471.2 L615.8 471.9 L605.0 466.0 L615.1 466.8 L606.2 460.9 L614.5 461.6 L605.4 455.7 L611.0 456.5 L604.5 450.5 L613.1 451.3 L604.2 445.4 L611.7 446.2 L603.2 440.2 L608.2 441.0 L602.7 435.1 L607.0 435.9 L603.0 429.9 L608.8 430.7 L601.4 424.8 L606.2 425.5 L601.9 419.6 L605.9 420.4 L601.0 414.5 L605.0 415.2 L600.2 409.3 L602.6 410.1 L600.0 404.2 L602.4 404.9 L599.5 399.0 L601.0 399.8 L598.8 393.9 L599.8 394.6Z" fill="#263e2d"/>
<path d="M540.4 392.4 L538.9 397.4 L539.9 396.7 L537.6 402.4 L539.3 401.7 L536.3 407.4 L538.7 406.7 L534.9 412.5 L537.7 411.7 L533.8 417.5 L537.2 416.7 L532.8 422.5 L537.5 421.7 L532.3 427.5 L537.2 426.7 L532.3 432.5 L536.6 431.7 L529.4 437.5 L535.3 436.7 L529.3 442.5 L536.0 441.7 L526.8 447.5 L534.6 446.7 L525.8 452.5 L534.4 451.8 L524.9 457.5 L534.7 456.8 L526.1 462.5 L533.3 461.8 L522.4 467.5 L533.5 466.8 L524.0 472.5 L533.0 471.8 L520.4 477.5 L532.8 476.8 L519.4 482.5 L530.0 481.8 L518.1 487.5 L531.0 486.8 L517.3 492.5 L528.9 491.8 L529.8 492.5 L551.1 492.5 L551.5 491.8 L562.7 492.5 L551.2 486.8 L561.3 487.5 L548.0 481.8 L559.2 482.5 L548.1 476.8 L560.3 477.5 L549.5 471.8 L558.9 472.5 L547.8 466.8 L557.1 467.5 L546.3 461.8 L555.2 462.5 L548.1 456.8 L552.9 457.5 L547.0 451.8 L555.2 452.5 L545.7 446.7 L552.3 447.5 L546.4 441.7 L551.1 442.5 L545.0 436.7 L551.5 437.5 L544.0 431.7 L550.7 432.5 L544.0 426.7 L548.3 427.5 L543.2 421.7 L547.3 422.5 L543.4 416.7 L546.6 417.5 L542.9 411.7 L544.8 412.5 L542.4 406.7 L544.1 407.4 L541.7 401.7 L542.8 402.4 L541.1 396.7 L541.9 397.4Z" fill="#223a2a"/>
<path d="M578.9 396.0 L577.3 401.1 L578.3 400.3 L576.0 406.2 L577.6 405.4 L574.7 411.2 L577.4 410.5 L574.6 416.3 L576.8 415.6 L573.6 421.4 L575.6 420.6 L572.0 426.5 L575.4 425.7 L569.6 431.6 L575.3 430.8 L568.2 436.6 L574.6 435.9 L567.1 441.7 L573.3 441.0 L567.9 446.8 L573.6 446.0 L564.5 451.9 L573.7 451.1 L563.8 457.0 L573.6 456.2 L565.2 462.1 L571.1 461.3 L565.0 467.1 L571.1 466.4 L564.4 472.2 L572.0 471.5 L562.9 477.3 L571.7 476.5 L558.7 482.4 L570.6 481.6 L558.8 487.5 L570.7 486.7 L557.4 492.5 L570.1 491.8 L568.4 492.5 L589.4 492.5 L587.1 491.8 L600.4 492.5 L589.5 486.7 L597.4 487.5 L588.9 481.6 L598.4 482.4 L587.7 476.5 L595.2 477.3 L587.3 471.5 L594.6 472.2 L586.1 466.4 L596.6 467.1 L586.3 461.3 L595.2 462.1 L585.8 456.2 L590.9 457.0 L584.2 451.1 L592.0 451.9 L585.1 446.0 L589.4 446.8 L584.5 441.0 L588.5 441.7 L583.0 435.9 L587.6 436.6 L583.5 430.8 L587.3 431.6 L581.8 425.7 L585.2 426.5 L581.7 420.6 L585.7 421.4 L581.2 415.6 L583.7 416.3 L581.1 410.5 L582.9 411.2 L580.0 405.4 L582.0 406.2 L579.6 400.3 L580.5 401.1Z" fill="#263e2d"/>
<path d="M528.6 401.3 L527.1 406.4 L527.9 405.6 L525.7 411.5 L527.4 410.7 L525.1 416.5 L526.9 415.8 L523.7 421.6 L526.1 420.8 L521.3 426.7 L526.1 425.9 L521.4 431.7 L524.5 431.0 L519.8 436.8 L524.3 436.0 L518.1 441.9 L524.0 441.1 L517.2 446.9 L523.5 446.2 L515.7 452.0 L523.7 451.2 L515.9 457.1 L521.9 456.3 L515.7 462.1 L522.1 461.4 L513.6 467.2 L522.7 466.4 L512.2 472.3 L520.0 471.5 L513.9 477.3 L520.6 476.6 L511.7 482.4 L519.2 481.7 L509.1 487.5 L519.5 486.7 L510.6 492.5 L519.8 491.8 L518.3 492.5 L538.9 492.5 L537.4 491.8 L546.0 492.5 L536.7 486.7 L549.4 487.5 L538.3 481.7 L544.4 482.4 L536.4 476.6 L545.4 477.3 L535.2 471.5 L543.1 472.3 L536.2 466.4 L544.1 467.2 L535.3 461.4 L541.4 462.1 L535.3 456.3 L542.6 457.1 L533.6 451.2 L540.8 452.0 L533.0 446.2 L540.8 446.9 L533.7 441.1 L538.3 441.9 L532.9 436.0 L536.8 436.8 L531.7 431.0 L536.1 431.7 L531.8 425.9 L534.9 426.7 L531.4 420.8 L533.3 421.6 L530.3 415.8 L532.9 416.5 L530.0 410.7 L531.2 411.5 L529.2 405.6 L530.1 406.4Z" fill="#29422b"/>
<path d="M507.9 402.8 L506.2 408.1 L507.0 407.3 L504.8 413.4 L506.5 412.6 L503.7 418.6 L505.8 417.8 L502.7 423.9 L505.3 423.1 L500.3 429.2 L505.2 428.4 L500.9 434.5 L503.9 433.7 L500.2 439.8 L503.8 439.0 L497.5 445.0 L503.1 444.2 L495.9 450.3 L502.1 449.5 L496.2 455.6 L502.8 454.8 L496.0 460.9 L502.1 460.1 L491.4 466.2 L501.7 465.4 L489.8 471.4 L499.9 470.6 L489.1 476.7 L498.8 475.9 L487.6 482.0 L500.3 481.2 L489.3 487.3 L499.8 486.5 L487.9 492.5 L498.8 491.8 L497.6 492.5 L518.1 492.5 L518.1 491.8 L528.5 492.5 L517.7 486.5 L528.5 487.3 L514.9 481.2 L525.1 482.0 L516.8 475.9 L523.1 476.7 L516.3 470.6 L523.9 471.4 L514.9 465.4 L521.0 466.2 L515.2 460.1 L520.6 460.9 L513.5 454.8 L521.6 455.6 L513.4 449.5 L520.8 450.3 L513.4 444.2 L519.3 445.0 L511.4 439.0 L516.9 439.8 L512.2 433.7 L515.8 434.5 L511.1 428.4 L515.0 429.2 L510.6 423.1 L513.6 423.9 L509.8 417.8 L512.2 418.6 L509.1 412.6 L510.7 413.4 L508.6 407.3 L509.5 408.1Z" fill="#314a2c"/>
<path d="M199.8 414.6 L198.3 419.8 L198.9 419.1 L197.2 425.0 L198.5 424.3 L195.8 430.2 L198.0 429.4 L194.8 435.4 L197.4 434.6 L193.7 440.6 L196.9 439.8 L192.3 445.8 L195.8 445.0 L192.1 451.0 L195.9 450.2 L188.6 456.2 L195.4 455.4 L190.1 461.4 L194.8 460.6 L188.8 466.6 L193.8 465.8 L186.7 471.8 L193.4 471.0 L186.3 477.0 L192.4 476.2 L185.6 482.2 L193.1 481.4 L183.7 487.4 L191.0 486.6 L182.9 492.5 L192.4 491.8 L190.7 492.5 L208.9 492.5 L206.7 491.8 L215.1 492.5 L207.0 486.6 L215.1 487.4 L206.8 481.4 L216.4 482.2 L205.7 476.2 L215.0 477.0 L206.6 471.0 L211.8 471.8 L205.2 465.8 L210.4 466.6 L204.2 460.6 L210.1 461.4 L204.5 455.4 L210.7 456.2 L203.3 450.2 L208.4 451.0 L204.0 445.0 L208.1 445.8 L203.4 439.8 L205.7 440.6 L202.5 434.6 L205.9 435.4 L201.5 429.4 L203.4 430.2 L201.2 424.3 L202.3 425.0 L200.6 419.1 L201.4 419.8Z" fill="#1a2d27"/>
<path d="M518.2 416.7 L516.6 421.8 L517.6 421.0 L515.0 426.8 L517.0 426.1 L514.0 431.9 L516.4 431.1 L512.0 436.9 L515.8 436.2 L511.2 442.0 L514.9 441.2 L509.4 447.1 L514.7 446.3 L507.9 452.1 L514.0 451.3 L506.7 457.2 L512.4 456.4 L507.1 462.2 L511.9 461.5 L503.5 467.3 L512.9 466.5 L504.8 472.3 L511.8 471.6 L501.7 477.4 L509.9 476.6 L502.4 482.4 L510.8 481.7 L498.3 487.5 L509.4 486.7 L497.0 492.5 L510.9 491.8 L508.5 492.5 L527.9 492.5 L526.2 491.8 L538.4 492.5 L526.1 486.7 L535.4 487.5 L526.9 481.7 L533.9 482.4 L524.3 476.6 L531.8 477.4 L524.5 471.6 L534.1 472.3 L525.3 466.5 L533.0 467.3 L524.7 461.5 L529.5 462.2 L523.2 456.4 L530.0 457.2 L522.7 451.3 L528.4 452.1 L521.7 446.3 L527.6 447.1 L521.3 441.2 L526.2 442.0 L520.6 436.2 L524.5 436.9 L520.2 431.1 L523.0 431.9 L519.7 426.1 L521.6 426.8 L519.1 421.0 L520.0 421.8Z" fill="#263e2d"/>
<path d="M208.7 419.1 L207.0 424.3 L207.9 423.6 L205.9 429.6 L207.1 428.8 L203.8 434.8 L207.0 434.0 L203.4 440.1 L206.2 439.3 L202.4 445.3 L205.8 444.5 L201.8 450.6 L204.8 449.8 L199.4 455.8 L204.1 455.0 L198.0 461.1 L203.2 460.3 L197.5 466.3 L202.4 465.5 L195.1 471.6 L202.3 470.8 L196.1 476.8 L201.8 476.0 L194.1 482.1 L202.1 481.3 L193.7 487.3 L201.8 486.5 L191.2 492.5 L201.6 491.8 L199.8 492.5 L217.6 492.5 L215.6 491.8 L223.8 492.5 L215.4 486.5 L224.1 487.3 L215.9 481.3 L225.0 482.1 L215.4 476.0 L222.6 476.8 L215.4 470.8 L223.3 471.6 L214.6 465.5 L219.7 466.3 L213.3 460.3 L220.7 461.1 L213.2 455.0 L218.1 455.8 L212.1 449.8 L216.5 450.6 L211.6 444.5 L215.9 445.3 L211.0 439.3 L215.1 440.1 L210.7 434.0 L212.6 434.8 L210.0 428.8 L212.0 429.6 L209.4 423.6 L210.3 424.3Z" fill="#20362f"/>
<path d="M562.7 419.1 L560.7 424.3 L561.9 423.6 L559.2 429.6 L561.4 428.8 L558.0 434.8 L560.6 434.0 L556.2 440.1 L560.1 439.3 L554.8 445.3 L559.6 444.5 L553.7 450.6 L559.1 449.8 L553.7 455.8 L557.5 455.0 L552.3 461.1 L557.1 460.3 L548.2 466.3 L556.8 465.5 L547.0 471.6 L556.7 470.8 L546.8 476.8 L555.9 476.0 L548.0 482.1 L553.6 481.3 L545.8 487.3 L554.3 486.5 L541.6 492.5 L552.8 491.8 L553.1 492.5 L572.2 492.5 L570.4 491.8 L583.4 492.5 L570.6 486.5 L581.8 487.3 L569.5 481.3 L580.8 482.1 L568.8 476.0 L578.6 476.8 L568.6 470.8 L575.6 471.6 L569.2 465.5 L576.0 466.3 L568.3 460.3 L573.3 461.1 L566.8 455.0 L572.0 455.8 L567.0 449.8 L572.7 450.6 L565.8 444.5 L570.9 445.3 L565.4 439.3 L569.0 440.1 L565.0 434.0 L567.2 434.8 L564.1 428.8 L566.0 429.6 L563.5 423.6 L564.6 424.3Z" fill="#263e2d"/>
<path d="M230.9 420.6 L229.4 425.7 L230.1 424.9 L228.0 430.9 L229.4 430.1 L226.7 436.0 L228.7 435.2 L225.9 441.1 L228.6 440.4 L224.6 446.3 L227.7 445.5 L224.0 451.4 L227.0 450.6 L222.3 456.6 L227.0 455.8 L221.2 461.7 L226.8 460.9 L219.9 466.8 L226.3 466.1 L216.2 472.0 L225.6 471.2 L217.3 477.1 L223.7 476.4 L215.6 482.3 L223.5 481.5 L212.6 487.4 L222.3 486.6 L211.9 492.5 L222.1 491.8 L222.1 492.5 L239.7 492.5 L237.6 491.8 L246.5 492.5 L238.3 486.6 L249.5 487.4 L237.4 481.5 L246.5 482.3 L236.4 476.4 L244.4 477.1 L236.8 471.2 L245.1 472.0 L236.3 466.1 L241.4 466.8 L236.5 460.9 L240.0 461.7 L235.0 455.8 L240.1 456.6 L234.8 450.6 L238.1 451.4 L233.9 445.5 L237.0 446.3 L233.9 440.4 L235.8 441.1 L233.1 435.2 L235.3 436.0 L232.6 430.1 L234.1 430.9 L231.6 424.9 L232.7 425.7Z" fill="#274036"/>
<path d="M485.6 420.6 L483.9 425.7 L484.8 424.9 L482.3 430.9 L484.4 430.1 L481.6 436.0 L483.6 435.2 L480.1 441.1 L482.4 440.4 L478.2 446.3 L482.0 445.5 L475.8 451.4 L481.6 450.6 L474.4 456.6 L480.7 455.8 L474.9 461.7 L479.9 460.9 L471.3 466.8 L479.5 466.1 L473.6 472.0 L478.8 471.2 L471.9 477.1 L479.4 476.4 L470.3 482.3 L478.8 481.5 L468.8 487.4 L478.4 486.6 L469.5 492.5 L478.2 491.8 L476.1 492.5 L495.2 492.5 L495.5 491.8 L506.8 492.5 L493.5 486.6 L500.6 487.4 L492.3 481.5 L501.2 482.3 L491.7 476.4 L498.6 477.1 L491.5 471.2 L499.8 472.0 L491.1 466.1 L498.0 466.8 L490.5 460.9 L496.9 461.7 L489.7 455.8 L494.2 456.6 L489.6 450.6 L495.2 451.4 L489.4 445.5 L493.7 446.3 L488.3 440.4 L491.7 441.1 L487.6 435.2 L490.7 436.0 L487.4 430.1 L488.8 430.9 L486.3 424.9 L487.3 425.7Z" fill="#2c462d"/>
<path d="M156.8 422.1 L155.5 427.1 L156.2 426.3 L153.8 432.1 L155.5 431.4 L152.6 437.2 L154.6 436.4 L152.0 442.2 L154.3 441.4 L149.5 447.2 L153.6 446.5 L148.5 452.3 L152.5 451.5 L148.1 457.3 L152.6 456.5 L145.0 462.3 L151.2 461.6 L144.5 467.4 L151.6 466.6 L144.2 472.4 L151.2 471.7 L141.3 477.4 L150.3 476.7 L143.9 482.5 L151.0 481.7 L141.6 487.5 L150.0 486.8 L139.8 492.5 L148.7 491.8 L148.1 492.5 L165.6 492.5 L166.3 491.8 L171.7 492.5 L163.5 486.8 L173.5 487.5 L163.9 481.7 L171.0 482.5 L162.8 476.7 L170.5 477.4 L161.8 471.7 L169.7 472.4 L162.9 466.6 L168.3 467.4 L162.1 461.6 L166.1 462.3 L161.0 456.5 L166.6 457.3 L160.8 451.5 L163.8 452.3 L160.3 446.5 L162.7 447.2 L159.8 441.4 L163.1 442.2 L159.1 436.4 L161.6 437.2 L158.5 431.4 L159.8 432.1 L157.6 426.3 L158.2 427.1Z" fill="#2a4435"/>
<path d="M472.3 422.1 L470.8 427.1 L471.6 426.3 L469.4 432.1 L471.0 431.4 L468.0 437.2 L470.4 436.4 L466.3 442.2 L469.7 441.4 L465.1 447.2 L468.9 446.5 L464.7 452.3 L468.3 451.5 L463.6 457.3 L467.7 456.5 L459.5 462.3 L467.9 461.6 L461.0 467.4 L466.8 466.6 L459.7 472.4 L466.4 471.7 L459.5 477.4 L464.9 476.7 L458.1 482.5 L464.3 481.7 L452.6 487.5 L462.8 486.8 L454.4 492.5 L462.6 491.8 L462.8 492.5 L481.8 492.5 L482.1 491.8 L492.0 492.5 L481.9 486.8 L490.0 487.5 L479.4 481.7 L488.6 482.5 L479.3 476.7 L487.1 477.4 L479.0 471.7 L485.7 472.4 L479.1 466.6 L486.4 467.4 L478.2 461.6 L485.0 462.3 L477.6 456.5 L480.9 457.3 L476.9 451.5 L481.6 452.3 L475.4 446.5 L480.7 447.2 L474.6 441.4 L477.8 442.2 L474.4 436.4 L476.3 437.2 L473.7 431.4 L475.2 432.1 L473.2 426.3 L474.3 427.1Z" fill="#223a2a"/>
<path d="M177.6 423.5 L175.8 428.8 L176.9 428.0 L174.7 434.2 L176.1 433.4 L173.4 439.5 L175.6 438.7 L172.5 444.8 L175.3 444.0 L169.6 450.1 L173.9 449.3 L169.7 455.4 L173.8 454.6 L168.9 460.7 L173.6 459.9 L166.8 466.0 L172.4 465.2 L164.0 471.3 L170.9 470.5 L165.2 476.6 L171.3 475.8 L164.1 481.9 L170.4 481.1 L161.3 487.2 L169.7 486.4 L163.0 492.5 L169.3 491.8 L168.9 492.5 L186.3 492.5 L185.2 491.8 L192.2 492.5 L185.4 486.4 L192.4 487.2 L184.0 481.1 L191.7 481.9 L183.7 475.8 L189.8 476.6 L183.6 470.5 L188.3 471.3 L182.0 465.2 L187.3 466.0 L182.2 459.9 L186.2 460.7 L181.2 454.6 L186.4 455.4 L180.4 449.3 L184.2 450.1 L180.6 444.0 L183.0 444.8 L179.6 438.7 L182.3 439.5 L178.9 433.4 L180.3 434.2 L178.5 428.0 L179.1 428.8Z" fill="#233a31"/>
<path d="M250.2 424.4 L248.3 429.7 L249.4 428.9 L246.7 434.9 L248.5 434.1 L246.2 440.1 L247.7 439.4 L244.5 445.4 L247.2 444.6 L242.1 450.6 L246.2 449.8 L241.8 455.9 L246.4 455.1 L239.9 461.1 L245.4 460.3 L237.6 466.3 L245.2 465.6 L237.2 471.6 L243.4 470.8 L237.1 476.8 L243.5 476.0 L236.8 482.1 L243.6 481.3 L233.2 487.3 L243.9 486.5 L232.5 492.5 L241.5 491.8 L241.5 492.5 L258.8 492.5 L259.0 491.8 L265.9 492.5 L258.0 486.5 L264.4 487.3 L256.7 481.3 L263.2 482.1 L257.6 476.0 L262.4 476.8 L255.8 470.8 L260.8 471.6 L255.6 465.6 L262.2 466.3 L255.5 460.3 L261.3 461.1 L253.9 455.1 L258.5 455.9 L253.7 449.8 L256.3 450.6 L252.8 444.6 L256.3 445.4 L252.2 439.4 L254.1 440.1 L251.7 434.1 L253.4 434.9 L250.9 428.9 L251.8 429.7Z" fill="#1a2d27"/>
<path d="M534.5 425.0 L532.7 430.2 L533.5 429.4 L531.2 435.4 L533.0 434.6 L530.2 440.6 L532.3 439.8 L527.6 445.8 L532.0 445.0 L527.8 451.0 L531.2 450.2 L525.9 456.2 L530.5 455.4 L524.1 461.4 L528.7 460.6 L524.1 466.6 L529.7 465.8 L521.3 471.8 L529.1 471.0 L519.5 477.0 L526.6 476.2 L517.2 482.2 L527.9 481.4 L516.2 487.4 L526.9 486.6 L516.7 492.5 L526.0 491.8 L525.2 492.5 L543.9 492.5 L543.2 491.8 L555.1 492.5 L542.8 486.6 L550.5 487.4 L540.9 481.4 L551.7 482.2 L540.4 476.2 L549.9 477.0 L539.9 471.0 L547.9 471.8 L540.7 465.8 L547.8 466.6 L538.8 460.6 L545.3 461.4 L538.9 455.4 L543.0 456.2 L538.2 450.2 L542.7 451.0 L537.6 445.0 L541.8 445.8 L537.2 439.8 L539.5 440.6 L536.3 434.6 L538.3 435.4 L535.3 429.4 L536.3 430.2Z" fill="#263e2d"/>
<path d="M151.5 425.6 L149.9 430.8 L150.8 430.0 L148.2 435.9 L150.1 435.1 L146.3 441.1 L149.4 440.3 L144.9 446.2 L149.2 445.4 L144.2 451.4 L148.5 450.6 L143.4 456.5 L147.4 455.7 L142.4 461.7 L146.9 460.9 L141.2 466.8 L145.8 466.0 L141.1 472.0 L146.1 471.2 L138.1 477.1 L144.7 476.3 L138.7 482.3 L144.2 481.5 L133.6 487.4 L143.6 486.6 L133.3 492.5 L144.9 491.8 L142.9 492.5 L160.1 492.5 L158.3 491.8 L166.8 492.5 L158.1 486.6 L168.8 487.4 L157.7 481.5 L165.4 482.3 L158.0 476.3 L164.4 477.1 L157.2 471.2 L165.3 472.0 L157.0 466.0 L163.0 466.8 L155.9 460.9 L160.2 461.7 L154.9 455.7 L159.5 456.5 L155.2 450.6 L157.8 451.4 L154.0 445.4 L157.6 446.2 L154.0 440.3 L155.5 441.1 L152.8 435.1 L155.0 435.9 L152.3 430.0 L153.1 430.8Z" fill="#1d312b"/>
<path d="M219.1 425.6 L217.6 430.8 L218.4 430.0 L215.6 435.9 L217.6 435.1 L214.8 441.1 L216.8 440.3 L212.6 446.2 L216.5 445.4 L211.3 451.4 L215.5 450.6 L211.8 456.5 L214.9 455.7 L209.0 461.7 L215.3 460.9 L207.9 466.8 L214.9 466.0 L206.3 472.0 L212.4 471.2 L204.6 477.1 L212.9 476.3 L204.7 482.3 L212.4 481.5 L202.2 487.4 L212.8 486.6 L201.3 492.5 L211.0 491.8 L210.4 492.5 L227.7 492.5 L225.9 491.8 L234.0 492.5 L227.3 486.6 L233.0 487.4 L225.4 481.5 L231.9 482.3 L225.0 476.3 L233.4 477.1 L223.9 471.2 L232.7 472.0 L224.0 466.0 L230.7 466.8 L224.0 460.9 L230.0 461.7 L223.6 455.7 L227.6 456.5 L222.7 450.6 L225.3 451.4 L222.1 445.4 L224.6 446.2 L221.5 440.3 L223.0 441.1 L220.5 435.1 L222.5 435.9 L219.8 430.0 L220.6 430.8Z" fill="#1d312b"/>
<path d="M494.5 425.6 L492.6 430.8 L493.6 430.0 L491.5 435.9 L493.0 435.1 L490.1 441.1 L492.4 440.3 L487.4 446.2 L491.9 445.4 L486.9 451.4 L490.5 450.6 L485.3 456.5 L489.7 455.7 L485.6 461.7 L489.0 460.9 L481.6 466.8 L488.6 466.0 L481.5 472.0 L487.8 471.2 L480.5 477.1 L488.8 476.3 L479.5 482.3 L487.4 481.5 L476.0 487.4 L487.3 486.6 L474.0 492.5 L487.3 491.8 L485.2 492.5 L503.9 492.5 L502.8 491.8 L511.1 492.5 L501.7 486.6 L510.2 487.4 L503.0 481.5 L508.1 482.3 L501.6 476.3 L508.9 477.1 L501.1 471.2 L506.3 472.0 L500.2 466.0 L506.2 466.8 L499.2 460.9 L505.5 461.7 L498.5 455.7 L504.4 456.5 L498.1 450.6 L502.3 451.4 L497.5 445.4 L501.2 446.2 L497.1 440.3 L499.3 441.1 L496.4 435.1 L497.6 435.9 L495.5 430.0 L496.1 430.8Z" fill="#29422b"/>
<path d="M167.2 426.5 L165.6 431.6 L166.4 430.8 L164.5 436.7 L165.9 435.9 L162.5 441.7 L165.1 441.0 L162.0 446.8 L164.0 446.1 L160.9 451.9 L163.5 451.1 L158.7 457.0 L163.1 456.2 L157.3 462.1 L162.0 461.3 L156.8 467.1 L161.3 466.4 L153.8 472.2 L161.1 471.5 L155.8 477.3 L160.9 476.5 L153.8 482.4 L161.3 481.6 L152.6 487.5 L160.5 486.7 L152.1 492.5 L158.3 491.8 L158.6 492.5 L175.8 492.5 L175.4 491.8 L185.8 492.5 L175.5 486.7 L182.9 487.5 L173.4 481.6 L181.6 482.4 L173.0 476.5 L179.5 477.3 L172.4 471.5 L178.5 472.2 L171.9 466.4 L178.8 467.1 L172.0 461.3 L178.1 462.1 L171.5 456.2 L174.7 457.0 L170.2 451.1 L173.7 451.9 L170.2 446.1 L173.5 446.8 L169.2 441.0 L171.8 441.7 L168.4 435.9 L170.7 436.7 L168.1 430.8 L168.8 431.6Z" fill="#233a31"/>
<path d="M262.0 426.5 L260.2 431.6 L261.3 430.8 L258.8 436.7 L260.5 435.9 L257.1 441.7 L259.8 441.0 L255.9 446.8 L259.4 446.1 L255.4 451.9 L258.4 451.1 L253.5 457.0 L258.0 456.2 L252.9 462.1 L258.3 461.3 L252.1 467.1 L257.2 466.4 L248.3 472.2 L256.0 471.5 L250.1 477.3 L254.9 476.5 L245.7 482.4 L255.1 481.6 L248.3 487.5 L254.2 486.7 L243.3 492.5 L255.3 491.8 L253.4 492.5 L270.6 492.5 L269.0 491.8 L277.0 492.5 L270.5 486.7 L278.2 487.5 L269.2 481.6 L276.2 482.4 L269.3 476.5 L277.2 477.3 L267.5 471.5 L272.8 472.2 L266.4 466.4 L272.4 467.1 L267.3 461.3 L272.9 462.1 L266.3 456.2 L271.5 457.0 L264.8 451.1 L269.9 451.9 L264.9 446.1 L267.3 446.8 L264.1 441.0 L266.6 441.7 L263.4 435.9 L264.9 436.7 L262.8 430.8 L263.8 431.6Z" fill="#1a2d27"/>
<path d="M189.4 428.0 L187.7 433.4 L188.6 432.6 L186.5 438.7 L188.0 437.9 L184.0 444.1 L186.8 443.3 L182.5 449.5 L186.1 448.7 L181.6 454.9 L185.6 454.1 L179.3 460.3 L185.9 459.5 L180.6 465.6 L185.3 464.8 L179.5 471.0 L184.9 470.2 L176.4 476.4 L183.2 475.6 L177.4 481.8 L183.8 481.0 L172.4 487.2 L182.4 486.4 L175.1 492.5 L180.8 491.7 L180.9 492.5 L198.0 492.5 L197.5 491.7 L205.0 492.5 L196.3 486.4 L204.1 487.2 L197.2 481.0 L204.9 481.8 L196.1 475.6 L203.3 476.4 L195.2 470.2 L202.2 471.0 L195.1 464.8 L200.9 465.6 L194.3 459.5 L198.4 460.3 L193.1 454.1 L197.3 454.9 L192.3 448.7 L194.8 449.5 L192.0 443.3 L194.9 444.1 L191.1 437.9 L192.6 438.7 L190.3 432.6 L191.5 433.4Z" fill="#233a31"/>
<path d="M241.3 428.6 L239.4 433.9 L240.4 433.1 L237.5 439.2 L239.8 438.4 L236.5 444.6 L239.3 443.8 L234.7 449.9 L238.2 449.1 L233.5 455.2 L238.3 454.4 L232.3 460.6 L236.7 459.8 L231.8 465.9 L237.2 465.1 L229.9 471.2 L236.7 470.4 L227.7 476.6 L236.2 475.8 L225.0 481.9 L234.8 481.1 L223.6 487.2 L234.8 486.4 L222.4 492.5 L234.7 491.8 L232.8 492.5 L249.8 492.5 L250.2 491.8 L260.3 492.5 L248.6 486.4 L258.6 487.2 L247.2 481.1 L256.1 481.9 L248.0 475.8 L252.5 476.6 L246.0 470.4 L253.0 471.2 L246.1 465.1 L252.1 465.9 L244.7 459.8 L249.4 460.6 L244.3 454.4 L248.4 455.2 L244.2 449.1 L247.6 449.9 L243.3 443.8 L246.7 444.6 L242.7 438.4 L244.3 439.2 L242.1 433.1 L243.0 433.9Z" fill="#20362f"/>
<path d="M270.9 430.0 L269.1 435.3 L270.1 434.5 L267.9 440.5 L269.5 439.7 L265.5 445.7 L268.8 444.9 L264.3 450.9 L267.5 450.1 L263.0 456.1 L266.9 455.3 L262.1 461.3 L266.9 460.5 L259.4 466.5 L266.9 465.7 L260.9 471.7 L265.9 470.9 L258.0 476.9 L264.8 476.1 L256.7 482.1 L263.2 481.4 L257.5 487.3 L264.2 486.6 L254.3 492.5 L264.1 491.8 L262.4 492.5 L279.3 492.5 L278.8 491.8 L286.6 492.5 L279.2 486.6 L287.4 487.3 L276.8 481.4 L283.2 482.1 L277.4 476.1 L283.9 476.9 L275.5 470.9 L281.3 471.7 L275.4 465.7 L280.1 466.5 L274.7 460.5 L278.8 461.3 L275.0 455.3 L278.9 456.1 L273.4 450.1 L276.5 450.9 L272.8 444.9 L276.3 445.7 L272.7 439.7 L274.6 440.5 L271.8 434.5 L272.4 435.3Z" fill="#1d312b"/>
<path d="M447.1 430.9 L445.4 436.1 L446.2 435.3 L443.4 441.2 L445.6 440.4 L442.4 446.3 L444.8 445.6 L440.9 451.5 L444.5 450.7 L438.9 456.6 L443.0 455.8 L437.1 461.7 L442.8 461.0 L437.5 466.9 L443.0 466.1 L434.5 472.0 L441.7 471.2 L433.5 477.1 L441.9 476.4 L432.7 482.3 L440.7 481.5 L429.8 487.4 L440.0 486.6 L428.7 492.5 L439.0 491.8 L438.7 492.5 L455.6 492.5 L455.0 491.8 L463.5 492.5 L454.6 486.6 L463.2 487.4 L453.1 481.5 L461.5 482.3 L453.3 476.4 L458.5 477.1 L452.0 471.2 L459.2 472.0 L451.6 466.1 L458.7 466.9 L450.6 461.0 L454.8 461.7 L450.5 455.8 L453.6 456.6 L449.9 450.7 L452.4 451.5 L449.4 445.6 L451.8 446.3 L448.5 440.4 L450.0 441.2 L447.9 435.3 L448.9 436.1Z" fill="#1d312b"/>
<path d="M288.7 432.4 L286.8 437.4 L287.7 436.7 L285.5 442.4 L287.0 441.7 L283.8 447.5 L286.9 446.7 L282.1 452.5 L285.5 451.7 L280.9 457.5 L285.3 456.7 L279.7 462.5 L285.2 461.7 L279.9 467.5 L284.6 466.7 L278.8 472.5 L283.8 471.8 L276.4 477.5 L283.7 476.8 L276.4 482.5 L282.5 481.8 L271.9 487.5 L282.5 486.8 L272.3 492.5 L279.8 491.8 L280.3 492.5 L297.0 492.5 L296.9 491.8 L305.8 492.5 L296.2 486.8 L303.0 487.5 L294.2 481.8 L300.7 482.5 L294.9 476.8 L300.2 477.5 L294.1 471.8 L298.5 472.5 L293.4 466.7 L297.3 467.5 L293.0 461.7 L297.0 462.5 L292.6 456.7 L296.1 457.5 L291.7 451.7 L295.0 452.5 L290.6 446.7 L293.3 447.5 L290.3 441.7 L291.8 442.4 L289.5 436.7 L290.3 437.4Z" fill="#2a4435"/>
<path d="M300.5 436.9 L298.5 441.9 L299.5 441.2 L296.7 447.0 L298.8 446.2 L296.0 452.0 L297.9 451.3 L293.2 457.1 L298.0 456.4 L291.9 462.2 L296.7 461.4 L290.8 467.2 L296.8 466.5 L288.3 472.3 L294.8 471.5 L287.8 477.4 L294.3 476.6 L288.6 482.4 L293.7 481.7 L284.6 487.5 L292.9 486.7 L282.3 492.5 L292.6 491.8 L292.3 492.5 L308.7 492.5 L307.7 491.8 L316.5 492.5 L307.6 486.7 L316.9 487.5 L307.6 481.7 L312.1 482.4 L306.4 476.6 L314.3 477.4 L304.9 471.5 L310.6 472.3 L304.2 466.5 L310.3 467.2 L304.8 461.4 L309.4 462.2 L303.4 456.4 L307.0 457.1 L302.6 451.3 L305.2 452.0 L302.3 446.2 L304.3 447.0 L301.4 441.2 L302.6 441.9Z" fill="#1d312b"/>
<path d="M183.5 436.9 L181.9 441.9 L182.5 441.2 L180.3 447.0 L181.8 446.2 L178.6 452.0 L181.2 451.3 L177.5 457.1 L180.2 456.4 L176.7 462.2 L180.4 461.4 L174.8 467.2 L179.2 466.5 L173.7 472.3 L177.6 471.5 L170.7 477.4 L178.8 476.6 L171.0 482.4 L176.3 481.7 L169.2 487.5 L177.0 486.7 L165.7 492.5 L175.0 491.8 L175.3 492.5 L191.7 492.5 L190.2 491.8 L199.7 492.5 L189.9 486.7 L200.2 487.5 L189.6 481.7 L196.4 482.4 L189.2 476.6 L196.5 477.4 L187.8 471.5 L192.8 472.3 L187.2 466.5 L191.6 467.2 L187.3 461.4 L191.5 462.2 L186.3 456.4 L189.2 457.1 L185.4 451.3 L188.8 452.0 L184.9 446.2 L186.6 447.0 L184.5 441.2 L185.4 441.9Z" fill="#274036"/>
<path d="M438.2 436.9 L436.2 441.9 L437.2 441.2 L434.8 447.0 L436.7 446.2 L432.6 452.0 L435.9 451.3 L431.9 457.1 L435.8 456.4 L429.2 462.2 L434.4 461.4 L428.2 467.2 L433.8 466.5 L426.6 472.3 L434.1 471.5 L424.5 477.4 L431.7 476.6 L423.2 482.4 L431.9 481.7 L423.0 487.5 L430.4 486.7 L420.8 492.5 L431.4 491.8 L430.1 492.5 L446.4 492.5 L445.0 491.8 L455.8 492.5 L445.1 486.7 L455.1 487.5 L444.4 481.7 L449.7 482.4 L443.4 476.6 L449.2 477.4 L442.4 471.5 L447.5 472.3 L442.2 466.5 L448.7 467.2 L442.6 461.4 L445.4 462.2 L440.9 456.4 L443.9 457.1 L440.7 451.3 L443.9 452.0 L440.0 446.2 L441.8 447.0 L439.1 441.2 L439.9 441.9Z" fill="#233a31"/>
<path d="M501.9 436.9 L500.0 441.9 L501.1 441.2 L498.1 447.0 L500.2 446.2 L496.1 452.0 L499.3 451.3 L494.4 457.1 L498.1 456.4 L493.0 462.2 L498.2 461.4 L491.2 467.2 L497.1 466.5 L491.4 472.3 L497.4 471.5 L490.0 477.4 L495.4 476.6 L488.6 482.4 L496.3 481.7 L487.9 487.5 L493.8 486.7 L483.7 492.5 L493.2 491.8 L493.0 492.5 L510.8 492.5 L511.0 491.8 L519.4 492.5 L509.6 486.7 L518.5 487.5 L509.0 481.7 L518.1 482.4 L507.9 476.6 L513.9 477.4 L506.9 471.5 L512.1 472.3 L507.3 466.5 L512.8 467.2 L506.4 461.4 L509.3 462.2 L505.7 456.4 L509.7 457.1 L504.2 451.3 L506.9 452.0 L503.8 446.2 L505.6 447.0 L502.8 441.2 L504.0 441.9Z" fill="#314a2c"/>
<path d="M456.0 437.5 L454.0 442.5 L455.3 441.7 L452.5 447.5 L454.3 446.7 L451.5 452.5 L453.9 451.7 L449.4 457.5 L452.8 456.7 L447.4 462.5 L452.5 461.7 L447.1 467.5 L451.1 466.8 L444.6 472.5 L451.2 471.8 L445.0 477.5 L450.1 476.8 L441.8 482.5 L450.1 481.8 L442.4 487.5 L448.7 486.8 L442.3 492.5 L447.8 491.8 L447.9 492.5 L464.2 492.5 L464.3 491.8 L472.4 492.5 L462.0 486.8 L470.3 487.5 L462.2 481.8 L468.8 482.5 L462.6 476.8 L466.5 477.5 L460.2 471.8 L466.7 472.5 L461.1 466.8 L464.7 467.5 L459.2 461.7 L463.7 462.5 L458.9 456.7 L462.6 457.5 L458.0 451.7 L461.1 452.5 L457.6 446.7 L460.0 447.5 L456.8 441.7 L457.7 442.5Z" fill="#233a31"/>
<path d="M225.0 439.8 L222.7 445.1 L224.1 444.3 L221.3 450.4 L223.4 449.6 L219.4 455.6 L222.7 454.9 L218.8 460.9 L221.6 460.1 L215.3 466.2 L220.9 465.4 L214.2 471.5 L221.0 470.7 L212.9 476.7 L219.0 475.9 L212.6 482.0 L218.8 481.2 L209.9 487.3 L219.1 486.5 L207.1 492.5 L218.2 491.8 L216.9 492.5 L233.1 492.5 L231.3 491.8 L239.3 492.5 L232.6 486.5 L238.6 487.3 L230.8 481.2 L236.1 482.0 L229.9 475.9 L236.0 476.7 L230.0 470.7 L234.4 471.5 L228.7 465.4 L234.6 466.2 L228.3 460.1 L231.8 460.9 L227.4 454.9 L230.8 455.6 L227.0 449.6 L228.8 450.4 L225.9 444.3 L227.0 445.1Z" fill="#20362f"/>
<path d="M414.5 441.3 L412.5 446.4 L413.8 445.7 L411.3 451.6 L412.8 450.8 L409.5 456.7 L411.9 455.9 L407.0 461.8 L410.9 461.0 L407.3 466.9 L410.0 466.2 L404.6 472.1 L410.1 471.3 L403.8 477.2 L408.9 476.4 L400.2 482.3 L409.2 481.5 L399.1 487.4 L407.9 486.7 L397.6 492.5 L407.7 491.8 L406.5 492.5 L422.6 492.5 L421.8 491.8 L431.9 492.5 L420.9 486.7 L429.3 487.4 L420.8 481.5 L426.2 482.3 L420.4 476.4 L427.4 477.2 L419.4 471.3 L424.6 472.1 L418.2 466.2 L423.7 466.9 L418.0 461.0 L422.1 461.8 L416.9 455.9 L419.6 456.7 L416.1 450.8 L418.4 451.6 L415.3 445.7 L416.3 446.4Z" fill="#20362f"/>
<path d="M256.1 442.8 L254.1 448.3 L255.0 447.5 L252.6 453.8 L254.0 453.0 L251.0 459.4 L253.8 458.5 L248.3 464.9 L252.1 464.1 L248.2 470.4 L251.5 469.6 L244.7 476.0 L250.7 475.1 L244.4 481.5 L250.1 480.7 L243.1 487.0 L250.0 486.2 L241.4 492.5 L248.5 491.7 L248.1 492.5 L264.0 492.5 L262.3 491.7 L270.6 492.5 L261.5 486.2 L269.1 487.0 L261.6 480.7 L268.0 481.5 L261.1 475.1 L266.3 476.0 L260.0 469.6 L264.4 470.4 L259.1 464.1 L262.6 464.9 L259.3 458.5 L261.6 459.4 L258.0 453.0 L260.2 453.8 L257.2 447.5 L257.9 448.3Z" fill="#20362f"/>
<path d="M279.8 446.3 L277.7 451.5 L278.8 450.7 L275.5 456.6 L277.8 455.8 L274.1 461.7 L277.2 461.0 L272.5 466.9 L276.3 466.1 L269.7 472.0 L276.0 471.2 L270.6 477.1 L274.3 476.4 L268.7 482.3 L273.3 481.5 L265.2 487.4 L272.8 486.6 L264.2 492.5 L271.6 491.8 L272.0 492.5 L287.6 492.5 L288.0 491.8 L297.3 492.5 L286.0 486.6 L293.4 487.4 L285.9 481.5 L293.2 482.3 L284.4 476.4 L290.8 477.1 L283.7 471.2 L287.5 472.0 L283.6 466.1 L287.2 466.9 L282.4 461.0 L285.3 461.7 L281.8 455.8 L283.9 456.6 L280.9 450.7 L281.8 451.5Z" fill="#274036"/>
<path d="M382.0 447.2 L380.1 452.3 L381.1 451.5 L378.0 457.3 L380.3 456.5 L375.5 462.3 L379.7 461.6 L375.4 467.4 L378.7 466.6 L372.8 472.4 L377.1 471.7 L371.1 477.4 L376.9 476.7 L368.4 482.5 L375.9 481.7 L368.1 487.5 L375.9 486.8 L368.9 492.5 L375.6 491.8 L374.2 492.5 L389.8 492.5 L388.4 491.8 L397.9 492.5 L388.7 486.8 L396.0 487.5 L387.6 481.7 L393.1 482.5 L386.9 476.7 L391.5 477.4 L386.6 471.7 L390.8 472.4 L384.9 466.6 L389.6 467.4 L384.2 461.6 L388.5 462.3 L383.8 456.5 L386.3 457.3 L383.0 451.5 L384.4 452.3Z" fill="#20362f"/>
<path d="M339.0 448.7 L336.9 454.2 L338.0 453.4 L334.6 459.7 L336.6 458.8 L332.2 465.2 L336.4 464.3 L330.4 470.6 L334.9 469.8 L328.4 476.1 L333.7 475.3 L326.3 481.6 L332.7 480.8 L327.1 487.1 L333.9 486.2 L324.8 492.5 L331.0 491.7 L331.3 492.5 L346.7 492.5 L345.8 491.7 L354.9 492.5 L346.1 486.2 L353.2 487.1 L344.1 480.8 L351.5 481.6 L344.5 475.3 L349.4 476.1 L343.0 469.8 L347.8 470.6 L341.8 464.3 L344.7 465.2 L340.8 458.8 L343.0 459.7 L340.3 453.4 L341.1 454.2Z" fill="#1a2d27"/>
<path d="M393.8 449.3 L391.7 454.7 L392.7 453.9 L389.8 460.1 L391.5 459.3 L388.2 465.5 L391.2 464.7 L385.2 470.9 L389.4 470.1 L384.3 476.3 L388.8 475.5 L382.2 481.7 L388.6 480.9 L382.3 487.1 L386.5 486.3 L380.3 492.5 L386.5 491.7 L386.1 492.5 L401.5 492.5 L400.1 491.7 L410.8 492.5 L399.7 486.3 L406.7 487.1 L398.4 480.9 L405.6 481.7 L397.7 475.5 L403.7 476.3 L397.8 470.1 L402.3 470.9 L397.1 464.7 L399.7 465.5 L395.5 459.3 L398.4 460.1 L394.8 453.9 L396.5 454.7Z" fill="#233a31"/>
<path d="M424.9 449.3 L422.9 454.7 L423.8 453.9 L420.6 460.1 L422.9 459.3 L417.8 465.5 L422.4 464.7 L417.0 470.9 L421.3 470.1 L413.9 476.3 L420.5 475.5 L412.9 481.7 L418.7 480.9 L413.0 487.1 L418.2 486.3 L407.6 492.5 L417.1 491.7 L417.2 492.5 L432.6 492.5 L431.3 491.7 L440.4 492.5 L430.8 486.3 L436.9 487.1 L430.7 480.9 L435.7 481.7 L429.2 475.5 L433.5 476.3 L428.5 470.1 L432.2 470.9 L427.5 464.7 L430.9 465.5 L427.0 459.3 L428.7 460.1 L426.1 453.9 L427.3 454.7Z" fill="#274036"/>
<path d="M294.6 450.2 L292.5 455.5 L293.7 454.7 L290.7 460.8 L292.8 460.0 L289.0 466.1 L291.6 465.3 L286.6 471.4 L291.4 470.6 L285.2 476.7 L290.8 475.9 L283.4 482.0 L289.1 481.2 L281.7 487.3 L287.9 486.5 L277.7 492.5 L288.7 491.8 L286.9 492.5 L302.3 492.5 L301.1 491.8 L308.6 492.5 L301.3 486.5 L307.4 487.3 L299.3 481.2 L307.7 482.0 L299.3 475.9 L305.6 476.7 L297.9 470.6 L302.9 471.4 L297.4 465.3 L300.8 466.1 L296.5 460.0 L298.9 460.8 L295.7 454.7 L296.7 455.5Z" fill="#20362f"/>
<path d="M310.9 452.3 L308.5 457.3 L309.6 456.5 L306.2 462.3 L308.7 461.6 L304.3 467.4 L307.6 466.6 L301.8 472.4 L306.6 471.7 L299.7 477.4 L305.8 476.7 L300.6 482.5 L305.7 481.7 L296.6 487.5 L305.7 486.8 L296.8 492.5 L303.6 491.8 L303.3 492.5 L318.5 492.5 L317.7 491.8 L324.4 492.5 L316.6 486.8 L324.6 487.5 L315.5 481.7 L322.6 482.5 L316.2 476.7 L321.1 477.4 L315.1 471.7 L319.0 472.4 L313.9 466.6 L316.8 467.4 L313.2 461.6 L314.7 462.3 L311.9 456.5 L313.0 457.3Z" fill="#20362f"/>
<path d="M403.3 455.2 L400.9 460.6 L402.2 459.8 L398.1 465.9 L401.3 465.1 L397.5 471.2 L400.7 470.4 L395.0 476.6 L398.4 475.8 L391.8 481.9 L398.7 481.1 L389.2 487.2 L396.4 486.4 L389.1 492.5 L396.9 491.8 L395.8 492.5 L410.8 492.5 L410.1 491.8 L419.0 492.5 L408.9 486.4 L415.7 487.2 L408.8 481.1 L414.0 481.9 L406.8 475.8 L412.5 476.6 L406.3 470.4 L409.1 471.2 L405.4 465.1 L408.1 465.9 L404.3 459.8 L406.0 460.6Z" fill="#1a2d27"/>
<path d="M318.3 461.2 L315.4 466.4 L316.8 465.6 L313.6 471.6 L315.7 470.8 L309.9 476.9 L314.7 476.1 L308.8 482.1 L313.4 481.3 L307.5 487.3 L312.3 486.5 L304.3 492.5 L310.8 491.8 L311.0 492.5 L325.5 492.5 L323.9 491.8 L334.3 492.5 L323.4 486.5 L329.4 487.3 L323.6 481.3 L327.7 482.1 L322.1 476.1 L325.2 476.9 L320.7 470.8 L323.9 471.6 L319.8 465.6 L321.2 466.4Z" fill="#1a2d27"/>
<path d="M352.3 461.2 L349.9 466.4 L351.2 465.6 L347.8 471.6 L349.8 470.8 L344.0 476.9 L349.0 476.1 L341.8 482.1 L347.1 481.3 L339.0 487.3 L346.3 486.5 L337.0 492.5 L345.4 491.8 L345.1 492.5 L359.6 492.5 L357.8 491.8 L366.4 492.5 L357.5 486.5 L366.1 487.3 L357.1 481.3 L362.4 482.1 L356.1 476.1 L359.1 476.9 L354.9 470.8 L357.0 471.6 L353.5 465.6 L354.8 466.4Z" fill="#2a4435"/>
<path d="M365.7 466.5 L362.1 471.7 L364.2 470.9 L360.1 476.9 L362.8 476.1 L358.0 482.1 L360.9 481.3 L354.0 487.3 L360.6 486.6 L351.1 492.5 L358.2 491.8 L358.6 492.5 L372.7 492.5 L373.0 491.8 L380.2 492.5 L371.8 486.6 L376.2 487.3 L369.1 481.3 L375.0 482.1 L368.4 476.1 L371.5 476.9 L367.0 470.9 L369.3 471.7Z" fill="#20362f"/>
</g>
<g filter="url(#b2)">
<ellipse cx="370.1" cy="481.3" rx="20" ry="5" fill="#5f6c30" opacity="0.7"/>
<ellipse cx="411.6" cy="478.9" rx="16" ry="6" fill="#69763a" opacity="0.7"/>
<ellipse cx="444.2" cy="474.8" rx="13" ry="7" fill="#6d7a36" opacity="0.75"/>
<ellipse cx="429.4" cy="482.8" rx="22" ry="4" fill="#58672c" opacity="0.7"/>
<ellipse cx="556.7" cy="470.0" rx="15" ry="10" fill="#5f6c2e" opacity="0.75"/>
<ellipse cx="580.4" cy="475.4" rx="12" ry="10" fill="#66722f" opacity="0.7"/>
<ellipse cx="541.9" cy="481.3" rx="14" ry="6" fill="#50602a" opacity="0.7"/>
<ellipse cx="207.2" cy="477.7" rx="11" ry="6" fill="#3f5a38" opacity="0.5"/>
<ellipse cx="352.3" cy="484.8" rx="13" ry="4" fill="#50642e" opacity="0.6"/>
<ellipse cx="583.4" cy="457.6" rx="9" ry="8" fill="#55652c" opacity="0.5"/>
</g>
<rect x="142" y="487.6" width="461" height="14" fill="#1a281e" opacity=".9"/>
</g></g>
<g clip-path="url(#cpL)"><g filter="url(#organic)">
<defs><linearGradient id="lsky" x1="0" y1="0" x2="0" y2="1"><stop offset="0" stop-color="#bcc3cc"/><stop offset=".3" stop-color="#cfd3d8"/><stop offset=".7" stop-color="#e2dfde"/><stop offset="1" stop-color="#eee5de"/></linearGradient><linearGradient id="lskyr" x1="0" y1="0" x2="1" y2="0"><stop offset="0" stop-color="#9fabbb" stop-opacity="0"/><stop offset=".45" stop-color="#9fabbb" stop-opacity=".1"/><stop offset="1" stop-color="#9ba8ba" stop-opacity=".75"/></linearGradient><linearGradient id="lskyf" x1="0" y1="0" x2="0" y2="1"><stop offset="0" stop-color="#fff" stop-opacity="1"/><stop offset="1" stop-color="#fff" stop-opacity="0"/></linearGradient><mask id="lskym"><rect x="595" y="444" width="458" height="87.8" fill="url(#lskyf)"/></mask><linearGradient id="lwat" x1="0" y1="0" x2="0" y2="1"><stop offset="0" stop-color="#8c9fa6"/><stop offset=".3" stop-color="#8fa1a8"/><stop offset=".62" stop-color="#b0bbbf"/><stop offset="1" stop-color="#b5bfc3"/></linearGradient><linearGradient id="lrm" x1="0" y1="0" x2="0" y2="1"><stop offset="0" stop-color="#5d6c45"/><stop offset="1" stop-color="#414f34"/></linearGradient><linearGradient id="llm" x1="0" y1="0" x2="0" y2="1"><stop offset="0" stop-color="#566a6a"/><stop offset="1" stop-color="#5f7674"/></linearGradient></defs>
<rect x="588" y="437" width="472" height="110.7" fill="url(#lsky)"/>
<rect x="595" y="444" width="458" height="87.8" fill="url(#lskyr)" mask="url(#lskym)"/>
<g filter="url(#b2)">
<ellipse cx="669.6" cy="457.7" rx="70.4" ry="2.8" fill="#b3bac5" opacity="0.7"/>
<ellipse cx="804.2" cy="449.2" rx="79.6" ry="2.4" fill="#adb6c2" opacity="0.65"/>
<ellipse cx="972.5" cy="452.2" rx="73.4" ry="3.7" fill="#a3aebd" opacity="0.7"/>
<ellipse cx="749.1" cy="473.7" rx="79.6" ry="2.8" fill="#b9bfc8" opacity="0.65"/>
<ellipse cx="957.2" cy="472.1" rx="61.2" ry="2.4" fill="#b3bbc7" opacity="0.6"/>
<ellipse cx="681.8" cy="485.9" rx="67.3" ry="2.1" fill="#c2c6cc" opacity="0.6"/>
<ellipse cx="834.8" cy="485.9" rx="61.2" ry="2.1" fill="#c0c5cc" opacity="0.55"/>
<ellipse cx="997.0" cy="489.0" rx="45.9" ry="2.1" fill="#c4c9d0" opacity="0.6"/>
<ellipse cx="727.7" cy="464.5" rx="55.1" ry="1.8" fill="#e3e5e7" opacity="0.7"/>
<ellipse cx="889.9" cy="461.4" rx="61.2" ry="2.1" fill="#dfe2e5" opacity="0.7"/>
<ellipse cx="651.2" cy="473.7" rx="45.9" ry="1.8" fill="#e1e3e6" opacity="0.6"/>
<ellipse cx="941.9" cy="481.3" rx="49.0" ry="1.8" fill="#e2e4e6" opacity="0.6"/>
<ellipse cx="788.9" cy="498.1" rx="67.3" ry="1.8" fill="#ece6e2" opacity="0.7"/>
</g>
<g filter="url(#b05)">
<path d="M712.4 515.0 L718.2 511.6 L732.9 508.8 L750.3 507.0 L767.8 504.6 L785.2 505.5 L790.4 502.4 L799.0 507.0 L807.9 513.1 L818.3 517.4 L833.9 515.9 L850.1 516.5 L865.4 517.1 L865.4 547.1 L712.4 547.1Z" fill="#93a3ab"/>
<path d="M883.8 520.2 L896.0 515.3 L908.2 511.0 L923.5 512.2 L937.3 516.5 L937.3 531.8 L883.8 531.8Z" fill="#b9c2c8" opacity=".9"/>
<path d="M789.2 503.0 L792.6 504.0 L800.5 509.8 L808.5 515.9 L804.2 515.3 L796.9 510.4 L792.0 506.1Z" fill="#e2e6e8"/>
<path d="M761.4 520.2 L785.8 518.9 L810.3 520.2 L834.8 518.3 L865.4 520.2 L865.4 547.1 L761.4 547.1Z" fill="#a3b1b6"/>
<path d="M736.9 537.3 L761.4 532.4 L785.8 530.6 L810.3 531.2 L834.8 528.1 L865.4 523.2 L865.4 547.1 L736.9 547.1Z" fill="#7f9398"/>
<path d="M590.0 493.5 L595.5 492.3 L611.4 491.4 L630.4 489.0 L639.3 491.4 L651.2 498.4 L663.4 504.6 L675.7 502.7 L687.9 507.0 L698.3 508.8 L715.8 515.0 L732.9 523.5 L757.4 532.4 L773.6 545.6 L590.0 545.6Z" fill="url(#llm)"/>
<path d="M926.6 518.9 L941.6 513.1 L959.0 507.9 L976.5 502.7 L993.9 499.4 L1011.1 494.2 L1028.5 489.0 L1042.6 483.8 L1055.1 478.6 L1055.1 547.1 L926.6 547.1Z" fill="url(#lrm)"/>
</g>
<g filter="url(#b4)"><ellipse cx="804.2" cy="534.9" rx="45.9" ry="6.1" fill="#b4c0c5" opacity="0.75"/><ellipse cx="727.7" cy="539.4" rx="27.5" ry="4.3" fill="#8a9ea0" opacity="0.6"/><ellipse cx="1012.3" cy="510.4" rx="45.9" ry="7.6" fill="#6b7848" opacity="0.45"/></g>
<g filter="url(#b05)">
<path d="M590.0 504.3 L595.8 506.4 L602.9 511.6 L608.4 511.0 L620.0 515.3 L629.8 520.2 L639.0 518.9 L648.1 525.7 L654.9 524.5 L663.4 529.4 L672.6 528.7 L681.8 533.3 L689.4 532.7 L696.5 537.9 L697.7 545.6 L590.0 545.6Z" fill="#34502e"/>
<path d="M599.2 518.0 L617.5 520.2 L635.9 525.7 L654.3 531.8 L669.6 535.5 L669.6 542.5 L599.2 542.5Z" fill="#456030" opacity=".6"/>
<path d="M590.0 531.8 L614.5 533.3 L651.2 538.5 L697.1 542.5 L697.7 545.6 L590.0 545.6Z" fill="#263c24" opacity=".8"/>
<path d="M955.4 532.4 L967.6 527.2 L985.0 523.5 L1000.0 522.0 L1011.1 520.2 L1030.6 517.1 L1055.1 514.4 L1055.1 543.4 L957.2 543.4Z" fill="#2c3e26"/>
<path d="M975.6 526.3 L1000.0 522.6 L1030.6 517.7 L1055.1 515.3 L1055.1 528.7 L1018.4 531.8 L975.6 533.3Z" fill="#4f5f30" opacity=".55"/>
<path d="M795.0 544.0 L810.3 539.8 L831.7 536.7 L850.1 533.6 L850.7 545.6 L795.0 545.6Z" fill="#4a5e50"/>
<path d="M955.7 543.1 L1055.1 541.9 L1055.1 546.8 L955.7 547.1Z" fill="#a5a75c"/>
<path d="M595.5 545.3 L715.5 544.7 L716.1 547.1 L595.5 547.7Z" fill="#c9b3a2"/>
<path d="M755.2 545.3 L853.2 545.3 L853.2 546.8 L755.2 546.8Z" fill="#dcd9d2" opacity=".85"/>
</g>
<rect x="588" y="547.1" width="472" height="78.9" fill="url(#lwat)"/>
<clipPath id="cpLW"><rect x="580" y="547.1" width="490" height="90"/></clipPath>
<g clip-path="url(#cpLW)"><g filter="url(#b4)">
<path d="M577.8 537.9 L724.6 537.9 L712.4 559.3 L691.0 571.6 L666.5 583.8 L645.1 599.1 L635.9 623.6 L590.0 623.6Z" fill="#405759" opacity=".95"/>
<path d="M712.4 539.4 L865.4 539.4 L859.3 562.4 L822.6 574.6 L761.4 574.6 L718.5 568.5Z" fill="#687e85" opacity=".85"/>
<path d="M955.7 537.9 L1067.4 537.9 L1067.4 606.8 L1030.6 596.1 L993.9 586.9 L969.4 571.6Z" fill="#435449" opacity=".95"/>
<ellipse cx="779.7" cy="599.1" rx="91.8" ry="15.3" fill="#c3ccd0" opacity="0.75"/>
<ellipse cx="1012.3" cy="614.4" rx="52.0" ry="9.2" fill="#a9b4b6" opacity="0.8"/>
</g></g>
<g stroke-width=".6" opacity=".5">
<path d="M839.3 568.1 h19.8" stroke="#dfe4e6"/>
<path d="M855.6 583.0 h27.4" stroke="#6e8388"/>
<path d="M700.8 569.5 h39.9" stroke="#6e8388"/>
<path d="M841.7 587.2 h20.7" stroke="#c8d1d4"/>
<path d="M663.9 567.8 h37.6" stroke="#6e8388"/>
<path d="M896.1 599.7 h10.0" stroke="#dfe4e6"/>
<path d="M944.6 555.9 h34.4" stroke="#6e8388"/>
<path d="M917.3 582.9 h36.1" stroke="#dfe4e6"/>
<path d="M786.9 602.7 h31.3" stroke="#dfe4e6"/>
<path d="M1014.1 581.1 h36.1" stroke="#c8d1d4"/>
<path d="M817.2 555.5 h16.3" stroke="#dfe4e6"/>
<path d="M876.1 580.6 h17.6" stroke="#dfe4e6"/>
<path d="M852.6 605.5 h25.1" stroke="#6e8388"/>
<path d="M1000.1 589.9 h29.8" stroke="#c8d1d4"/>
<path d="M1038.9 606.9 h29.5" stroke="#c8d1d4"/>
<path d="M741.9 597.0 h25.3" stroke="#dfe4e6"/>
<path d="M915.0 588.9 h14.8" stroke="#dfe4e6"/>
<path d="M651.7 570.0 h23.4" stroke="#dfe4e6"/>
<path d="M635.7 615.3 h33.6" stroke="#6e8388"/>
<path d="M605.1 609.5 h21.7" stroke="#6e8388"/>
<path d="M615.9 608.0 h27.7" stroke="#c8d1d4"/>
<path d="M858.1 576.9 h25.6" stroke="#6e8388"/>
<path d="M1042.2 584.9 h17.9" stroke="#c8d1d4"/>
<path d="M835.4 560.0 h38.4" stroke="#6e8388"/>
<path d="M713.8 571.5 h30.1" stroke="#6e8388"/>
<path d="M1024.4 572.9 h36.7" stroke="#6e8388"/>
<path d="M984.7 576.9 h20.4" stroke="#dfe4e6"/>
<path d="M641.9 595.9 h39.1" stroke="#dfe4e6"/>
<path d="M879.5 570.2 h30.9" stroke="#6e8388"/>
<path d="M711.5 580.7 h17.7" stroke="#6e8388"/>
<path d="M781.6 553.9 h26.6" stroke="#c8d1d4"/>
<path d="M859.4 576.8 h12.3" stroke="#dfe4e6"/>
<path d="M804.4 592.6 h29.7" stroke="#6e8388"/>
<path d="M720.7 591.4 h23.7" stroke="#dfe4e6"/>
<path d="M898.1 557.0 h38.8" stroke="#6e8388"/>
<path d="M729.5 592.6 h27.2" stroke="#c8d1d4"/>
<path d="M735.8 576.0 h19.8" stroke="#dfe4e6"/>
<path d="M947.9 569.8 h11.4" stroke="#c8d1d4"/>
<path d="M901.6 614.2 h12.2" stroke="#dfe4e6"/>
<path d="M955.2 567.2 h15.6" stroke="#c8d1d4"/>
</g>
<g filter="url(#b05)">
<path d="M861.7 523.8 L874.6 520.2 L896.0 518.9 L908.2 528.7 L908.2 617.5 L836.6 617.5 L842.4 594.8 L846.1 574.0 L849.5 553.2 L854.7 535.8Z" fill="#6d6f60"/>
<path d="M859.3 531.8 L874.6 524.1 L885.3 531.8 L882.2 556.3 L866.9 583.8 L850.1 594.5 L848.6 568.5 L852.5 544.0Z" fill="#8a8c7e" opacity=".8"/>
<path d="M885.3 531.8 L905.2 528.7 L905.2 617.5 L866.9 617.5 L877.6 586.9 L886.2 562.4Z" fill="#4d5245" opacity=".85"/>
<path d="M844.0 593.0 L865.4 583.8 L871.5 617.5 L837.9 617.5Z" fill="#585d4e" opacity=".8"/>
<path d="M861.7 523.8 L872.1 515.0 L880.7 509.2 L889.6 502.7 L910.4 498.4 L918.9 500.9 L920.8 511.6 L927.8 523.8 L917.4 523.8 L907.0 527.8 L896.6 522.0 L879.2 520.2Z" fill="#363a33"/>
<path d="M883.8 509.8 L908.2 501.8 L916.8 503.0 L914.4 512.2 L892.9 517.1Z" fill="#4e524a" opacity=".8"/>
<path d="M869.7 490.5 L875.2 489.0 L880.7 501.2 L883.8 510.4 L876.1 515.3 L870.9 512.2 L869.1 502.7Z" fill="#a88068"/>
<path d="M868.8 499.7 L874.6 498.1 L879.2 505.8 L877.6 515.3 L870.9 514.1Z" fill="#3a2c24"/>
<path d="M867.8 481.9 L872.1 473.4 L882.5 468.2 L894.8 469.7 L903.3 478.6 L904.3 489.0 L901.8 499.4 L889.6 503.0 L877.3 499.7 L874.6 492.0 L869.7 492.3Z" fill="#2c2521"/>
<path d="M877.6 472.1 L892.9 471.2 L900.6 479.8 L892.9 485.9 L880.7 482.8Z" fill="#453a32" opacity=".7"/>
<path d="M907.0 527.8 L917.4 525.4 L941.6 527.2 L952.0 534.2 L957.2 549.9 L959.0 560.3 L967.6 568.8 L972.8 575.9 L969.4 581.1 L964.2 576.5 L965.2 598.5 L963.3 617.5 L894.8 617.5 L898.4 593.0 L902.1 568.5 L904.6 547.1Z" fill="#3a412e"/>
<path d="M922.0 531.2 L940.4 530.3 L950.5 537.9 L955.7 556.3 L957.2 574.6 L941.9 577.7 L929.7 562.4 L923.5 547.1Z" fill="#4a5038" opacity=".85"/>
<path d="M905.2 571.6 L917.4 568.5 L926.6 583.8 L929.7 605.2 L923.5 617.5 L896.9 617.5 L900.6 593.0Z" fill="#2a301f" opacity=".9"/>
<path d="M932.7 584.4 L951.1 579.8 L961.2 583.8 L962.1 605.2 L951.1 615.9 L934.2 611.4Z" fill="#565a3c" opacity=".8"/>
<path d="M908.2 530.3 L906.7 556.3 L914.4 583.8 L911.3 617.5" fill="none" stroke="#23281a" stroke-width="1.2"/>
<path d="M922.0 531.8 L926.6 562.4 L941.9 579.2 L961.8 576.2" fill="none" stroke="#23281a" stroke-width="1"/>
</g>
</g></g>
<g clip-path="url(#cpB)"><g filter="url(#organic)">
<defs><linearGradient id="bbg" x1="0" y1="0" x2="0" y2="1"><stop offset="0" stop-color="#3a3828"/><stop offset=".27" stop-color="#4a432e"/><stop offset=".36" stop-color="#7a5a3a"/><stop offset=".55" stop-color="#86623e"/><stop offset=".6" stop-color="#7c7466"/><stop offset="1" stop-color="#7a7468"/></linearGradient></defs>
<rect x="142" y="623" width="230" height="162" fill="url(#bbg)"/>
<g filter="url(#b4)">
<ellipse cx="168.9" cy="648.9" rx="24.4" ry="16.8" fill="#2f2e22" opacity="0.9"/>
<ellipse cx="306.0" cy="653.4" rx="19.8" ry="16.8" fill="#2b3222" opacity="0.95"/>
<ellipse cx="348.7" cy="648.9" rx="18.3" ry="18.3" fill="#343822" opacity="0.9"/>
<ellipse cx="336.5" cy="671.7" rx="18.3" ry="7.6" fill="#6a5830" opacity="0.7"/>
<ellipse cx="252.7" cy="635.1" rx="30.5" ry="6.1" fill="#4c4a34" opacity="0.8"/>
<ellipse cx="181.0" cy="683.1" rx="10.7" ry="3.8" fill="#b4b0aa" opacity="0.85"/>
<ellipse cx="328.9" cy="690.0" rx="33.5" ry="10.7" fill="#8e6a44" opacity="0.8"/>
<ellipse cx="164.3" cy="696.1" rx="18.3" ry="10.7" fill="#7a5638" opacity="0.8"/>
</g>
<g filter="url(#b1)">
<path d="M146.0 714.4 L191.7 711.3 L298.4 706.0 L365.4 704.5 L365.4 778.4 L146.0 778.4Z" fill="#807a6e"/>
<path d="M298.4 706.0 L365.4 704.5 L365.4 720.5 L344.1 717.4 L298.4 711.3Z" fill="#9a958a"/>
<path d="M146.0 725.0 L176.5 723.5 L191.7 741.8 L222.2 758.6 L255.7 757.0 L261.8 778.4 L146.0 778.4Z" fill="#5e584a"/>
<path d="M146.0 763.1 L257.2 761.6 L261.8 778.4 L146.0 778.4Z" fill="#464235"/>
<path d="M255.7 757.0 L298.4 760.1 L365.4 747.9 L365.4 769.2 L263.3 770.8Z" fill="#9c9788"/>
<path d="M263.3 767.7 L365.4 766.2 L365.4 778.4 L261.8 778.4Z" fill="#8a8468"/>
</g>
<g filter="url(#b05)">
<ellipse cx="328.9" cy="735.7" rx="29.0" ry="9.4" fill="#2a2b2a" opacity="1"/>
<ellipse cx="327.3" cy="732.7" rx="25.9" ry="6.9" fill="#3a3b38" opacity="0.8"/>
<path d="M301.4 703.7 L306.0 699.1 L316.7 697.6 L328.9 698.5 L336.5 705.2 L335.7 723.5 L328.9 729.9 L313.6 729.6 L303.0 723.5Z" fill="#2f3133"/>
<path d="M306.0 700.7 L316.7 698.5 L328.9 699.4 L334.2 704.5 L321.2 705.2 L310.6 704.5Z" fill="#4a4c4c" opacity=".8"/>
<path d="M329.6 717.4 L334.2 709.0 L335.7 711.3 L332.2 719.0Z" fill="#a48a3c"/>
<path d="M306.0 747.9 L315.1 750.2 L315.9 753.2 L307.5 751.7Z" fill="#1c1c1c"/>
<path d="M191.7 676.3 L203.9 661.0 L216.1 651.1 L223.7 652.2 L210.0 668.7 L200.9 690.0 L196.3 705.2 L198.6 711.3 L199.3 732.7 L204.7 751.3 L191.7 743.3 L180.3 732.7 L179.8 723.5 L184.1 712.9Z" fill="#2a2c30"/>
<path d="M168.6 717.4 L176.5 715.1 L181.8 720.5 L180.7 731.1 L173.4 731.1 L168.9 725.0Z" fill="#1e1e20"/>
<path d="M252.7 668.7 L280.1 676.3 L289.2 671.7 L294.6 683.9 L297.6 694.6 L299.1 708.3 L299.9 719.0 L283.1 721.2 L267.9 732.7 L261.8 717.4 L257.2 702.2 L255.7 687.0Z" fill="#969080"/>
<path d="M261.8 676.3 L278.6 679.3 L287.7 690.0 L283.1 702.2 L267.9 699.1 L261.8 690.0Z" fill="#b0aa98" opacity=".8"/>
<path d="M266.4 711.3 L298.4 709.0 L299.9 719.3 L283.1 721.7 L267.9 732.7Z" fill="#5a574c" opacity=".9"/>
<path d="M197.0 673.2 L210.0 660.3 L225.2 654.2 L237.4 656.5 L252.7 668.7 L256.0 687.0 L253.4 697.6 L219.1 694.9 L207.0 697.9 L198.6 711.3 L195.5 691.5Z" fill="#3e3c38"/>
<path d="M219.1 664.1 L237.4 661.0 L251.1 671.7 L252.7 690.0 L231.3 693.0 L217.6 683.9Z" fill="#55524a" opacity=".8"/>
<rect x="226.8" y="678.6" width="11.4" height="3.4" fill="#c8c0a8"/>
<path d="M221.4 648.9 L237.4 643.5 L261.8 641.2 L277.0 644.3 L286.2 655.0 L289.5 664.1 L287.7 673.2 L280.1 676.6 L267.9 675.1 L252.7 669.0 L237.4 656.8 L223.0 651.6Z" fill="#a9a08a"/>
<path d="M231.3 647.3 L249.6 644.3 L258.8 656.5 L252.7 665.6 L239.0 655.0Z" fill="#c4bca6" opacity=".7"/>
<path d="M251.1 644.3 L259.5 643.1 L280.1 674.5 L274.8 676.6Z" fill="#3b3533"/>
<path d="M237.4 635.1 L241.2 633.3 L243.5 635.1 L243.5 642.8 L238.2 643.5Z" fill="#5a5046"/>
<path d="M271.0 685.4 L275.5 683.9 L280.9 700.7 L276.3 703.0Z" fill="#7a4a2a"/>
<path d="M281.6 680.9 L286.2 679.3 L299.9 705.2 L296.9 708.3Z" fill="#3a3028"/>
<path d="M289.2 690.0 L293.0 688.5 L297.6 697.6 L294.6 699.1Z" fill="#8a5430"/>
<path d="M219.1 653.7 L225.5 654.3 L217.6 671.7 L213.0 693.0 L207.0 691.8 L210.0 671.7Z" fill="#9a5c30"/>
<ellipse cx="212.7" cy="681.6" rx="2.7" ry="2.7" fill="#b8b4aa" opacity="1"/>
<path d="M207.0 697.9 L219.1 694.9 L249.6 696.4 L257.2 702.2 L262.1 717.4 L260.6 739.1 L207.0 742.1 L199.6 732.7 L198.6 711.3Z" fill="#6c695e"/>
<path d="M207.0 699.1 L216.1 697.6 L217.6 738.8 L207.0 741.0 L200.1 732.7 L199.0 712.1Z" fill="#4c4d44"/>
<path d="M219.1 702.2 L246.6 702.2 L247.3 735.7 L219.1 737.2Z" fill="#7b786b" opacity=".9"/>
<path d="M208.5 700.7 L217.6 698.8 L249.6 700.7 L252.7 705.2" fill="none" stroke="#2e2e2c" stroke-width="1"/>
<path d="M251.1 699.1 L258.0 703.0 L262.6 717.4 L261.0 739.5 L252.7 740.0Z" fill="#4a4a44" opacity=".8"/>
<path d="M200.9 742.1 L260.6 739.1 L263.6 746.4 L252.7 755.8 L219.1 757.4 L204.7 751.3Z" fill="#8a4c26"/>
<path d="M210.0 747.9 L252.7 746.4 L251.1 755.5 L219.1 757.0Z" fill="#5e3218" opacity=".8"/>
<path d="M181.4 725.0 L185.9 723.5 L196.3 741.8 L213.0 753.7 L210.8 757.4 L191.7 746.4Z" fill="#7a4424"/>
<path d="M180.3 744.9 L184.1 743.3 L183.3 751.0 L179.8 750.2Z" fill="#6a3a1e"/>
<path d="M298.4 728.1 L306.8 726.9 L310.9 732.7 L308.7 744.1 L301.4 748.7 L297.6 747.9" fill="none" stroke="#d2521e" stroke-width="2.6"/>
<path d="M299.1 730.4 L305.2 729.6 L307.8 733.4 L306.0 742.6 L300.7 746.1 L298.4 744.9Z" fill="#1e1c1a"/>
<path d="M269.7 723.5 L298.7 723.5 L297.6 751.0 L294.6 758.9 L283.1 760.9 L273.2 758.9 L271.0 751.0Z" fill="#b62a1a"/>
<path d="M289.2 726.6 L298.4 726.6 L297.2 751.0 L294.6 758.9 L288.5 760.1Z" fill="#8e2012" opacity=".8"/>
<ellipse cx="284.4" cy="723.5" rx="14.8" ry="4.6" fill="#c2381c" opacity="1"/>
<ellipse cx="284.4" cy="723.2" rx="13.1" ry="3.5" fill="#d9c262" opacity="1"/>
<ellipse cx="283.1" cy="722.3" rx="9.1" ry="1.8" fill="#e8da8a" opacity="0.8"/>
</g>
</g></g>
<g clip-path="url(#cpM)"><g filter="url(#organic)">
<defs><linearGradient id="mwl" x1="0" y1="0" x2="0" y2="1"><stop offset="0" stop-color="#27413b"/><stop offset=".28" stop-color="#324e48"/><stop offset=".52" stop-color="#5f7e7c"/><stop offset=".78" stop-color="#98aeb0"/><stop offset="1" stop-color="#b0bfc1"/></linearGradient><linearGradient id="mwr" x1="0" y1="0" x2="0" y2="1"><stop offset="0" stop-color="#4a6a5e"/><stop offset=".22" stop-color="#6b8a80"/><stop offset=".5" stop-color="#a2b8b6"/><stop offset="1" stop-color="#bcc8ca"/></linearGradient></defs>
<rect x="360" y="623" width="243" height="49.5" fill="#3a5640"/>
<rect x="360" y="670.2" width="156.9" height="114.8" fill="url(#mwl)"/>
<rect x="516.9" y="670.2" width="86.1" height="114.8" fill="url(#mwr)"/>
<g filter="url(#b4)">
<ellipse cx="408.5" cy="684.9" rx="43.4" ry="10.8" fill="#28423c" opacity="0.8"/>
<ellipse cx="563.4" cy="680.2" rx="34.1" ry="6.2" fill="#466458" opacity="0.8"/>
<ellipse cx="393.0" cy="743.8" rx="31.0" ry="9.3" fill="#a9bcbe" opacity="0.8"/>
<ellipse cx="575.8" cy="725.2" rx="21.7" ry="12.4" fill="#c0cccd" opacity="0.8"/>
</g>
<g stroke="#c8d4d6" stroke-width=".7" opacity=".55">
<path d="M404.9 753.6 h13.3"/>
<path d="M382.9 699.5 h9.6"/>
<path d="M382.7 692.1 h6.6"/>
<path d="M585.9 702.9 h13.6"/>
<path d="M376.4 700.9 h15.7"/>
<path d="M368.5 756.0 h7.5"/>
<path d="M424.8 704.6 h15.6"/>
<path d="M589.1 713.3 h8.3"/>
<path d="M378.0 715.8 h13.8"/>
<path d="M565.0 696.0 h8.3"/>
<path d="M386.2 726.9 h12.5"/>
<path d="M371.6 761.7 h8.3"/>
<path d="M562.0 718.3 h10.9"/>
<path d="M368.7 737.5 h15.5"/>
<path d="M542.3 716.7 h8.3"/>
<path d="M399.1 734.9 h13.4"/>
<path d="M545.5 761.4 h5.1"/>
<path d="M388.3 716.4 h15.1"/>
<path d="M546.6 713.8 h13.6"/>
<path d="M573.2 765.2 h5.9"/>
<path d="M590.5 693.4 h12.9"/>
<path d="M542.5 701.9 h15.7"/>
<path d="M578.4 753.4 h5.6"/>
<path d="M588.1 699.0 h9.2"/>
<path d="M581.2 701.6 h15.1"/>
<path d="M537.3 762.5 h12.3"/>
<path d="M544.1 721.1 h5.8"/>
<path d="M390.4 737.7 h10.0"/>
<path d="M532.0 729.4 h10.6"/>
<path d="M530.4 742.7 h12.0"/>
<path d="M549.9 753.2 h7.2"/>
<path d="M572.8 739.4 h11.0"/>
<path d="M561.8 715.3 h7.3"/>
<path d="M558.8 717.0 h11.7"/>
</g>
<g filter="url(#b1)">
<path d="M362.0 629.1 L516.9 629.1 L516.9 668.6 L470.5 667.8 L427.1 670.2 L393.0 663.2 L362.0 657.0Z" fill="#304b36"/>
<path d="M510.7 629.1 L597.5 629.1 L597.5 649.2 L547.9 647.7 L510.7 644.6Z" fill="#5c7876"/>
<path d="M516.9 647.7 L540.2 646.9 L563.4 645.4 L597.5 643.0 L597.5 667.8 L516.9 668.6Z" fill="#566e40"/>
</g>
<g filter="url(#b2)">
<ellipse cx="380.6" cy="641.5" rx="12.4" ry="9.3" fill="#2c4632" opacity="0.9"/>
<ellipse cx="413.1" cy="646.1" rx="10.8" ry="12.4" fill="#3f5e3a" opacity="0.8"/>
<ellipse cx="442.6" cy="643.0" rx="12.4" ry="10.8" fill="#2e4a36" opacity="0.9"/>
<ellipse cx="461.2" cy="655.4" rx="9.3" ry="7.7" fill="#4f6d3e" opacity="0.8"/>
<ellipse cx="397.6" cy="657.0" rx="12.4" ry="4.6" fill="#4a6a3c" opacity="0.7"/>
<ellipse cx="540.2" cy="657.0" rx="10.8" ry="6.2" fill="#7a8a44" opacity="0.8"/>
<ellipse cx="569.6" cy="655.4" rx="12.4" ry="7.7" fill="#6a7e40" opacity="0.8"/>
<ellipse cx="586.7" cy="652.3" rx="7.7" ry="7.7" fill="#3f5a34" opacity="0.8"/>
<ellipse cx="555.7" cy="639.9" rx="23.2" ry="4.6" fill="#6a8482" opacity="0.8"/>
<ellipse cx="427.1" cy="635.3" rx="31.0" ry="4.6" fill="#41603f" opacity="0.7"/>
</g>
<g filter="url(#b1)">
<path d="M362.0 657.8 L371.3 659.3 L393.0 664.4 L424.0 670.2 L424.0 672.2 L393.0 671.2 L362.0 672.5Z" fill="#8c7c68"/>
<path d="M362.0 666.3 L393.0 669.4 L424.0 671.2 L470.5 670.2 L470.5 672.5 L362.0 677.1Z" fill="#6c6a52" opacity=".9"/>
<path d="M521.6 667.5 L555.7 666.6 L597.5 666.0 L597.5 672.5 L521.6 671.9Z" fill="#b2a982"/>
<path d="M424.0 666.6 L470.5 665.5 L473.6 670.9 L424.0 670.9Z" fill="#8c9458"/>
</g>
<g filter="url(#b05)">
<path d="M448.8 698.8 L461.2 694.2 L523.1 701.9 L537.1 712.8 L546.4 725.2 L552.9 743.8 L557.5 762.4 L560.6 770.1 L559.1 777.8 L403.8 777.8 L413.1 750.0 L419.3 732.9 L424.0 722.1 L430.2 712.8Z" fill="#4a4840"/>
<path d="M523.1 706.6 L535.5 714.3 L544.8 726.7 L551.0 745.3 L555.7 765.5 L544.8 774.7 L529.3 765.5 L524.7 743.8 L526.2 722.1Z" fill="#625e50" opacity=".85"/>
<path d="M495.3 732.9 L524.7 712.8 L526.2 743.8 L529.3 774.7 L501.5 774.7 L502.2 756.2Z" fill="#3a3730" opacity=".8"/>
<path d="M430.2 712.8 L448.8 699.6 L455.0 706.6 L448.8 719.0 L427.1 732.9 L420.9 732.9Z" fill="#6c685a" opacity=".8"/>
<path d="M453.4 694.2 L462.7 686.7 L476.7 679.6 L495.3 679.6 L509.2 684.9 L520.0 694.2 L525.0 702.2 L516.9 708.4 L501.5 714.6 L482.9 716.8 L467.4 712.8 L458.1 703.5Z" fill="#5b574a"/>
<path d="M461.2 689.5 L476.7 681.8 L492.2 682.1 L486.0 691.1 L470.5 698.8 L461.2 698.8Z" fill="#7a766a" opacity=".8"/>
<path d="M470.5 700.4 L495.3 691.1 L513.8 692.6 L521.6 701.9 L501.5 712.8 L482.9 715.1Z" fill="#3e3b33" opacity=".85"/>
<path d="M501.5 680.2 L510.7 683.6 L517.7 688.0 L522.4 691.1 L523.5 696.5 L513.8 692.6 L501.5 686.4Z" fill="#242422"/>
<path d="M473.6 663.2 L481.3 670.9 L490.6 668.1 L499.1 663.2 L502.2 672.5 L499.9 679.5 L479.8 679.5 L475.9 672.5Z" fill="#4a3b2d"/>
<path d="M498.4 663.5 L516.9 659.3 L520.4 666.6 L522.7 674.3 L520.4 680.2 L521.6 686.7 L516.9 687.4 L510.7 683.6 L501.5 679.5Z" fill="#b38c6e"/>
<path d="M499.9 666.6 L503.8 665.5 L505.3 672.5 L502.2 676.4 L499.6 672.5Z" fill="#966e52"/>
<path d="M505.3 677.1 L510.7 675.6 L516.9 679.0 L520.0 680.5 L521.9 687.4 L518.5 688.9 L510.7 685.2Z" fill="#3a2c22"/>
<path d="M473.3 657.8 L476.7 646.1 L486.0 639.9 L498.4 637.6 L507.7 639.9 L515.4 647.7 L517.9 653.9 L515.7 658.8 L501.5 661.9 L490.6 668.1 L481.3 671.2 L476.4 666.6Z" fill="#1c3a5a"/>
<path d="M486.0 641.5 L498.4 639.2 L506.9 641.5 L512.3 647.7 L501.5 649.2 L489.1 650.8Z" fill="#24476c" opacity=".8"/>
<path d="M515.4 649.2 L526.2 649.6 L531.8 650.8 L533.4 654.7 L529.7 657.3 L516.9 658.8Z" fill="#b9a28a"/>
<path d="M523.1 704.2 L529.0 708.1 L491.4 732.9 L485.6 725.9Z" fill="#3b3935"/>
<path d="M406.9 750.0 L413.1 740.7 L427.1 731.7 L448.8 722.4 L470.5 722.1 L486.0 728.3 L495.6 740.7 L501.8 757.7 L503.3 777.8 L403.5 777.8 L404.5 762.4Z" fill="#2a2826"/>
<path d="M448.8 725.2 L470.5 724.4 L484.4 731.4 L492.2 743.8 L470.5 740.7 L448.8 737.6Z" fill="#3e3a36" opacity=".85"/>
<path d="M420.9 726.7 L427.1 725.2 L448.8 722.4 L445.7 731.4 L428.6 737.6 L422.4 732.9Z" fill="#1c1b1a" opacity=".8"/>
</g>
</g></g>
<!--PH4-->
</g>
<g id="content">
<!-- logo -->
<g id="logo" fill="#203448">
<path d="M294 281.8 L334.6 252.4 L343 259.6 L372.1 229 L400.6 257.4 L407.6 250 L450.5 282.2 Q372 269.6 294 281.8 Z"/>
<path d="M371.3 237.2 L352.9 255.2 L356.6 257 L358.8 261.6 L360.4 261.4 L362.3 267.2 L364.2 263.8 L363 260 L366 258.6 L370.4 259.2 L369.6 262 L375 261 L383.5 266.6 L372.9 252.6 Z" fill="#fafafa"/>
<path d="M334.6 256.4 L323 269.8 L334.4 266 L346.4 271.4 Z" fill="#fafafa"/>
<path d="M407.6 254 L400.4 259.8 L409.5 269 L410.2 263.2 L413.8 263.2 Z" fill="#fafafa"/>
<filter id="arch" filterUnits="userSpaceOnUse" primitiveUnits="userSpaceOnUse" x="180" y="230" width="380" height="170" color-interpolation-filters="sRGB">
<feFlood flood-color="rgb(128,128,128)" result="base"/>
<feFlood flood-color="rgb(128,255,128)" x="311" y="317" width="121" height="40" result="bump"/>
<feMerge result="m0"><feMergeNode in="base"/><feMergeNode in="bump"/></feMerge>
<feGaussianBlur in="m0" stdDeviation="30 10" result="m"/>
<feDisplacementMap in="SourceGraphic" in2="m" scale="27" xChannelSelector="R" yChannelSelector="G" result="d"/><feGaussianBlur in="d" stdDeviation=".35"/>
</filter>
<g filter="url(#arch)"><text x="260.60" y="324.30" font-size="48" fill="#203448" font-weight="bold" textLength="221.00" lengthAdjust="spacingAndGlyphs" stroke="#203448" stroke-width=".9">NORTHLINE</text></g>
<path d="M261.4 335.4 L311.8 334 V336.8 Z"/><path d="M481.1 335.4 L430.7 334 V336.8 Z"/>
<text x="320" y="339.7" font-size="12.4" font-weight="bold" fill="#203448" textLength="101" lengthAdjust="spacing">SUPPLY CO.</text>
</g>
<!-- left column -->
<text x="197.00" y="530.70" font-size="23.6" fill="#1f3a5c" font-weight="bold" textLength="238.00" lengthAdjust="spacingAndGlyphs" stroke="#1f3a5c" stroke-width=".5">QUALITY OUTDOOR GEAR</text>
<path d="M197 540H562.5" stroke="#7da7d6" stroke-width="1.1"/>
<text x="197.00" y="567.50" font-size="13.4" fill="#20242a" textLength="326.80" lengthAdjust="spacingAndGlyphs" stroke="#20242a" stroke-width=".25">Lorem ipsum dolor sit amet, consectetuer adipiscing elit.</text>
<text x="197.00" y="587.20" font-size="13.4" fill="#20242a" textLength="340.00" lengthAdjust="spacingAndGlyphs" stroke="#20242a" stroke-width=".25">Integer vel suscipit libero. Nullam et metus nec justo cursus</text>
<text x="197.00" y="608.20" font-size="13.4" fill="#20242a" textLength="121.80" lengthAdjust="spacingAndGlyphs" stroke="#20242a" stroke-width=".25">pharetra ut id libero.</text>
<rect x="150" y="776" width="213" height="32.4" fill="#22384f"/>
<rect x="368" y="776" width="226" height="32.4" fill="#22384f"/>
<text x="190.60" y="798.50" font-size="17.3" fill="#ffffff" font-weight="bold" textLength="143.20" lengthAdjust="spacingAndGlyphs" stroke="#fff" stroke-width=".35">RUGGED &amp; RELIABLE</text>
<text x="394.00" y="798.50" font-size="17.3" fill="#ffffff" font-weight="bold" textLength="157.00" lengthAdjust="spacingAndGlyphs" stroke="#fff" stroke-width=".35">GEAR FOR ADVENTURE</text>
<!-- right column -->
<text x="658.70" y="290.30" font-size="21.9" fill="#1f3a5c" font-weight="bold" textLength="247.10" lengthAdjust="spacingAndGlyphs" stroke="#1f3a5c" stroke-width=".45">EXPLORE THE OUTDOORS</text>
<path d="M658.4 301H1009.5" stroke="#3b6a94" stroke-width="1.3"/>
<g fill="#1c2836"><circle cx="667.5" cy="335.8" r="2.7"/><circle cx="667.5" cy="369.8" r="2.7"/><circle cx="667.5" cy="403.2" r="2.7"/></g>
<text x="678.80" y="341.00" font-size="15.8" fill="#1c2836" textLength="211.30" lengthAdjust="spacingAndGlyphs" stroke="#1c2836" stroke-width=".18">High-Performance Equipment</text>
<text x="678.80" y="375.20" font-size="15.8" fill="#1c2836" textLength="196.10" lengthAdjust="spacingAndGlyphs" stroke="#1c2836" stroke-width=".18">Camping &amp; Hiking Essentials</text>
<text x="678.80" y="408.40" font-size="15.8" fill="#1c2836" textLength="152.70" lengthAdjust="spacingAndGlyphs" stroke="#1c2836" stroke-width=".18">Apparel &amp; Accessories</text>
<text x="648.70" y="659.70" font-size="21.8" fill="#1f3a5c" font-weight="bold" textLength="118.20" lengthAdjust="spacingAndGlyphs" stroke="#1f3a5c" stroke-width=".45">CONTACT US</text>
<path d="M648.5 669.5H1009.5" stroke="#6f8fb2" stroke-width="1.1"/>
<text x="672.70" y="699.70" font-size="14.2" fill="#1c2430" textLength="252.00" lengthAdjust="spacingAndGlyphs" stroke="#1c2430" stroke-width=".18">1234 Wilderness Trail, Denver, CO 80216</text>
<text x="673.10" y="729.20" font-size="14.2" fill="#1c2430" textLength="177.20" lengthAdjust="spacingAndGlyphs" stroke="#1c2430" stroke-width=".18">info@northlinesupplyco.com</text>
<text x="673.10" y="758.50" font-size="14.2" fill="#1c2430" textLength="175.80" lengthAdjust="spacingAndGlyphs" stroke="#1c2430" stroke-width=".18">www.northlinesupplyco.com</text>
<text x="671.20" y="789.60" font-size="14.4" fill="#1c2430" textLength="101.50" lengthAdjust="spacingAndGlyphs" stroke="#1c2430" stroke-width=".18">(555) 123-4567</text>
<g id="cicons" fill="#1e2c3e">
<path d="M654.8 688.2 C651.6 688.2 649.3 690.6 649.3 693.6 C649.3 697 652.6 700 654.8 702.8 C657 700 660.4 697 660.4 693.6 C660.4 690.6 658 688.2 654.8 688.2 Z M654.8 691.4 A2.1 2.1 0 1 1 654.8 695.6 A2.1 2.1 0 1 1 654.8 691.4Z" fill-rule="evenodd"/>
<rect x="648.2" y="719.4" width="14.8" height="10.2" rx=".8"/><path d="M648.6 720 L655.6 725.4 L662.6 720 M648.6 729.2 L653.6 724.2 M662.6 729.2 L657.6 724.2" stroke="#fafafa" stroke-width="1" fill="none"/>
<circle cx="655.3" cy="753.9" r="7.1"/><g stroke="#fafafa" stroke-width=".9" fill="none"><ellipse cx="655.3" cy="753.9" rx="3.1" ry="7.1"/><path d="M648.2 753.9H662.4 M649.2 750.2H661.4 M649.2 757.6H661.4"/></g>
<path d="M650.6 778 L653.6 777.6 L655.2 781.6 L653.4 783.2 C654.2 785.4 656 787.4 658 788.2 L659.6 786.4 L663.2 788.2 L662.6 791 C662.4 792 661.4 792.4 660.4 792.2 C654 791 649.6 786.2 648.8 780.2 C648.7 779 649.4 778.2 650.6 778Z"/>
</g>
<path d="M786.4 794H1009.5" stroke="#b4b8bc" stroke-width="1"/>
<text x="835.60" y="824.00" font-size="12.7" fill="#1a1f28" font-weight="bold" textLength="77.50" lengthAdjust="spacingAndGlyphs" >FOLLOW US:</text>
<g id="social">
<circle cx="935.6" cy="819" r="11" fill="#2c4a6a"/>
<path d="M936.8 830 V821 H939.8 L940.3 817.6 H936.8 V815.6 C936.8 814.4 937.4 813.8 938.6 813.8 H940.4 V810.8 C939.6 810.6 938.6 810.6 937.8 810.6 C935 810.6 933.2 812.2 933.2 815.2 V817.6 H930.4 V821 H933.2 V830 Z" fill="#fafafa"/>
<rect x="954.1" y="808.8" width="21.6" height="20.2" rx="4.4" fill="#2a4868"/>
<rect x="958" y="812.4" width="13.8" height="13" rx="3" fill="none" stroke="#f4f4f4" stroke-width="1.5"/><circle cx="964.9" cy="818.9" r="3.2" fill="none" stroke="#f4f4f4" stroke-width="1.5"/><circle cx="969" cy="814.9" r=".9" fill="#f4f4f4"/>
<circle cx="995.1" cy="818.8" r="11.8" fill="#2e86c8"/>
<path d="M1002 814.2 C1001.4 814.5 1000.8 814.7 1000.2 814.8 C1000.9 814.4 1001.4 813.8 1001.6 813 C1001 813.4 1000.3 813.6 999.6 813.8 C999 813.2 998.2 812.8 997.3 812.8 C995.5 812.8 994.1 814.2 994.1 816 C994.1 816.2 994.1 816.5 994.2 816.7 C991.6 816.6 989.3 815.3 987.8 813.4 C987.5 813.9 987.4 814.4 987.4 815 C987.4 816.1 987.9 817 988.8 817.6 C988.3 817.6 987.8 817.4 987.4 817.2 C987.4 818.8 988.5 820 989.9 820.3 C989.4 820.4 989 820.4 988.5 820.3 C988.9 821.6 990.1 822.5 991.5 822.5 C990.2 823.5 988.6 824 987 823.9 C988.5 824.8 990.2 825.3 992 825.3 C997.3 825.3 1000.3 820.9 1000.3 817 V816.6 C1001 816 1001.5 815.2 1002 814.2Z" fill="#fafafa"/>
</g>
</g>
<!-- guides -->
<g id="guides" fill="none">
<path d="M150 487.2H594.6" stroke="#dfe6e6" stroke-width="1" opacity=".7"/>
<rect x="127.6" y="222.4" width="942" height="623.6" stroke="#a9bccf" stroke-width=".8" stroke-dasharray="5 3" opacity=".5"/>
<rect x="159.6" y="221.6" width="883.6" height="624.2" stroke="#cfd6dc" stroke-width=".8" stroke-dasharray="4 2.5" opacity=".4"/>
<path d="M149.2 197V868 M104 215.2H1091 M1053 197V868 M104 853.3H1091" stroke="#3a3a3a" stroke-width=".5" opacity=".55"/>
<rect x="137.2" y="203.8" width="926.8" height="658.4" stroke="#2392e0" stroke-width="1.3"/>
<rect x="149.3" y="215.1" width="903.7" height="638.2" stroke="#e2141e" stroke-width="1.5"/>
<path d="M595.6 197V868" stroke="#2f95e0" stroke-width="1.1" stroke-dasharray="7 1.5"/>
<path d="M612.6 197V868" stroke="#2d94e0" stroke-width="1" stroke-dasharray="6 2"/>
</g>
</svg>
</div>
<div id="vscroll" class="a" style="left:1136px;top:96px;width:23px;height:904px;background:#494949;border-left:1px solid #525252;box-sizing:border-box">
<svg style="left:0;top:0" width="23" height="904" viewBox="0 0 23 904">
<path d="M6 12.5 L11 7.5 L16 12.5" stroke="#7c7c7c" stroke-width="1.6" fill="none"/>
<path d="M6 887 L11 892 L16 887" stroke="#7c7c7c" stroke-width="1.6" fill="none"/>
<rect x="2.6" y="409" width="17.6" height="33" rx="8.5" fill="#565656"/></svg>
</div>
<div id="iconstrip" class="a" style="left:1159px;top:96px;width:49px;height:928px;background:#535353;border-left:1px solid #424242;border-right:2px solid #424242;box-sizing:border-box">
<svg style="left:0;top:0" width="46" height="928" viewBox="1160 96 46 928">
<g stroke="#424242" stroke-width="1.4"><path d="M1160 177.5H1206 M1160 264.5H1206 M1160 315.6H1206 M1160 366.8H1206 M1160 417H1206"/></g>
<g font-size="5.4" font-weight="bold" fill="#3d3d3d" text-anchor="middle"><text x="1183.5" y="105">TBX</text><text x="1183.5" y="188.6">TOGGLE</text><text x="1183.5" y="276.4">TOGGLE</text><text x="1183.5" y="327">TOGGLE</text><text x="1183.5" y="378">TOGGLE</text></g>
<path d="M1181 115.5 C1184 113.5 1188 114 1191 116.5 C1195 120 1195.5 125 1193 129.5 C1190.5 134 1185 135.5 1181 132.5 C1177 130 1173 127 1173.5 123 C1174 120 1177 118.5 1178.5 117 Z" fill="#d2d2d2"/>
<path d="M1174 147.5 H1185 L1193.3 155.5 V168 H1174 Z" fill="#e0e0e0"/><rect x="1180.5" y="156.5" width="10" height="9" fill="#5a5a5a"/><rect x="1174.8" y="161.5" width="4" height="5" fill="#555"/>
<path d="M1176 200 H1189 V206 H1195 V215.5 H1188 V218 H1176 Z" fill="#d6d6d6"/><path d="M1176 208.2H1189" stroke="#535353" stroke-width="1.1"/>
<path d="M1178 238 C1179 234.5 1190 234.5 1191 238 L1191 241 H1196 V249.5 H1173 V241 H1178 Z" fill="#d6d6d6"/><rect x="1182.4" y="249.5" width="4.2" height="3" fill="#d6d6d6"/><rect x="1179" y="252.6" width="11" height="1.8" fill="#d6d6d6"/>
<text x="1177" y="302.4" font-size="21" fill="#e4e4e4" textLength="19" lengthAdjust="spacingAndGlyphs">AI</text>
<rect x="1176.4" y="339.4" width="18" height="13" fill="#555" stroke="#dcdcdc" stroke-width="1.6"/><path d="M1189 343 L1192 343 L1192 349 Z" fill="#dcdcdc"/>
<path d="M1176 389 H1190 V392 H1196 V405 H1179 V392.5 H1176 Z" fill="none" stroke="#9a9a9a" stroke-width="1"/><rect x="1179.5" y="393.5" width="16.5" height="11.5" fill="#cfcfcf"/>
</g>
</svg>
</div>
<div id="panels" class="a" style="left:1208px;top:96px;width:328px;height:928px;background:#535353">
<svg style="left:0;top:-16px" width="328" height="944" viewBox="1208 80 328 944">
<!-- top strip icons -->
<g fill="#bdbdbd"><path d="M1178 83 V90.5 H1187 V83 H1185 V87 H1180 V83Z"/><path d="M1192.5 83 V91 H1194 V88 L1198 90 V84 L1194 86 V83Z"/><rect x="1514.5" y="86.5" width="2.2" height="3.2" fill="#9a9a9a"/><rect x="1519" y="86.5" width="2.2" height="3.2" fill="#9a9a9a"/></g>
<!-- Layers tabbar -->
<rect x="1208" y="95.5" width="328" height="34" fill="#474747"/>
<rect x="1208" y="95.5" width="65" height="34.5" fill="#555555"/>
<path d="M1353 97V129 M1411 97V129" stroke="#3e3e3e" stroke-width="1.2"/>
<path d="M1273.4 97V129" stroke="#3e3e3e" stroke-width="1"/>
<path d="M1208 95.5H1536" stroke="#434343" stroke-width="1"/>
<text x="1219.30" y="117.30" font-size="14.4" fill="#ffffff" font-weight="bold" textLength="42.60" lengthAdjust="spacingAndGlyphs" >Layers</text>
<text x="1282.30" y="117.30" font-size="14.4" fill="#9c9c9c" textLength="57.60" lengthAdjust="spacingAndGlyphs" >Channels</text>
<text x="1365.40" y="117.30" font-size="14.4" fill="#9c9c9c" textLength="33.60" lengthAdjust="spacingAndGlyphs" >Paths</text>
<path d="M1511 109H1523.5 M1511 113H1523.5 M1511 117H1523.5" stroke="#c8c8c8" stroke-width="1.5"/>
<!-- layer list -->
<rect x="1218" y="139.8" width="304.6" height="267.4" fill="#515151" stroke="#646464" stroke-width="1"/>
<rect x="1218" y="139.8" width="304.6" height="27" fill="#4a6485"/>
<rect x="1218" y="167.3" width="304.6" height="27.4" fill="#4c4c4c"/>
<rect x="1218" y="195.4" width="304.6" height="27.4" fill="#4c4c4c"/>
<path d="M1218 167H1522.6 M1218 195H1522.6 M1218 223H1522.6" stroke="#5f5f5f" stroke-width="1"/>
<path d="M1250 140V223 M1268 140V223 M1486.4 140V223" stroke="#5a5a5a" stroke-width="1" opacity=".8"/>
<defs><linearGradient id="lg2" x1="0" y1="0" x2="0" y2="1"><stop offset="0" stop-color="#7c55dc"/><stop offset="1" stop-color="#dc4fae"/></linearGradient><linearGradient id="lg3" x1="0" y1="0" x2="0" y2="1"><stop offset="0" stop-color="#dcc42c"/><stop offset="1" stop-color="#8fd044"/></linearGradient></defs>
<rect x="1269.8" y="140.4" width="3.6" height="26.4" fill="#169ae8"/><rect x="1269.8" y="168" width="3.6" height="26.4" fill="url(#lg2)"/><rect x="1269.8" y="196" width="3.6" height="26.4" fill="url(#lg3)"/>
<g id="eyes">
<g transform="translate(0 0.0)"><path d="M1223.4 153 C1226.5 147.6 1235.5 147.6 1238.6 153 C1235.5 158.4 1226.5 158.4 1223.4 153Z" fill="#e8e8e8"/><circle cx="1231" cy="153" r="2.9" fill="#4a6485"/><circle cx="1231" cy="153" r="1.2" fill="#e8e8e8" opacity=".0"/></g><g transform="translate(0 27.8)"><path d="M1223.4 153 C1226.5 147.6 1235.5 147.6 1238.6 153 C1235.5 158.4 1226.5 158.4 1223.4 153Z" fill="#e8e8e8"/><circle cx="1231" cy="153" r="2.9" fill="#4c4c4c"/><circle cx="1231" cy="153" r="1.2" fill="#e8e8e8" opacity=".0"/></g><g transform="translate(0 55.8)"><path d="M1223.4 153 C1226.5 147.6 1235.5 147.6 1238.6 153 C1235.5 158.4 1226.5 158.4 1223.4 153Z" fill="#e8e8e8"/><circle cx="1231" cy="153" r="2.9" fill="#4c4c4c"/><circle cx="1231" cy="153" r="1.2" fill="#e8e8e8" opacity=".0"/></g>
</g>
<g fill="#e4e4e4"><path d="M1279 149.5 L1286.6 148.6 L1284.6 156.8 Z"/><path d="M1279 176.8 L1286.8 175.6 L1285 184.8 Z"/><path d="M1279 205 L1286.6 204 L1284.6 212.4 Z"/></g>
<rect x="1294.6" y="144" width="19" height="19.4" fill="#ffffff" stroke="#1c1c1c" stroke-width="1.3"/>
<rect x="1294.6" y="171.6" width="19" height="19.4" fill="#d6d6d6" stroke="#1c1c1c" stroke-width="1.3"/>
<rect x="1294.6" y="199.4" width="19" height="19.4" fill="#565656" stroke="#1c1c1c" stroke-width="1.3"/>
<text x="1322.70" y="158.80" font-size="14" fill="#ffffff" textLength="41.60" lengthAdjust="spacingAndGlyphs" stroke="#fff" stroke-width=".25">Layer 3</text>
<text x="1322.70" y="186.70" font-size="14" fill="#ffffff" textLength="41.60" lengthAdjust="spacingAndGlyphs" stroke="#fff" stroke-width=".25">Guides</text>
<text x="1322.70" y="214.60" font-size="14" fill="#ffffff" textLength="71.30" lengthAdjust="spacingAndGlyphs" stroke="#fff" stroke-width=".25">Background</text>
<g fill="none" stroke="#d4d4d4" stroke-width="1.2"><circle cx="1504" cy="153.6" r="4.6"/><circle cx="1504" cy="181.6" r="4.6"/><circle cx="1504" cy="209.6" r="4.6"/></g>
<path d="M1514.5 143.5 L1518.5 147 M1517.5 141.5 L1521 144.6" stroke="#d0d0d0" stroke-width="1.6"/>
<!-- layers footer -->
<text x="1223.00" y="425.60" font-size="14" fill="#f0f0f0" textLength="52.00" lengthAdjust="spacingAndGlyphs" xml:space="preserve">3  Layers</text>
<g id="lfoot" fill="#cfcfcf">
<rect x="1357.6" y="412" width="12.4" height="10" /><rect x="1352.8" y="423" width="4.4" height="3.4"/>
<path d="M1390 413 H1403.6 V422.5 H1390Z M1392 415 V418 H1401.6 V415Z" fill-rule="evenodd"/><rect x="1392.6" y="423.6" width="9" height="1.6"/><path d="M1402 424.5H1404.5V422" stroke="#cfcfcf" fill="none"/>
<path d="M1424 414.5 H1435.6 V425.6 H1424Z"/><path d="M1420 413 L1425 413 L1425 420 L1420 418Z"/>
<path d="M1454 412.6 H1466.4 V424 H1454Z"/><rect x="1457" y="417.4" width="6.6" height="3.4" fill="#535353"/><path d="M1464 425.6H1467" stroke="#cfcfcf" stroke-width="1.4"/>
<path d="M1485.6 415 H1496.4 L1495.6 426 H1486.4Z" fill="none" stroke="#cfcfcf" stroke-width="1.3"/><path d="M1484.6 414H1497.4 M1489 412.4H1493" stroke="#cfcfcf" stroke-width="1.3"/><path d="M1489 417.4V424 M1491 417.4V424 M1493 417.4V424" stroke="#cfcfcf" stroke-width=".8"/>
</g>
<!-- strip 1 -->
<rect x="1208" y="430" width="328" height="14.2" fill="#474747"/><rect x="1208" y="430" width="328" height="1.2" fill="#3f3f3f"/>
<rect x="1513.8" y="436.6" width="2.4" height="3.4" fill="#8c8c8c"/><rect x="1519.2" y="436.6" width="2.4" height="3.4" fill="#8c8c8c"/>
<!-- swatches 1 -->
<rect x="1208" y="444.2" width="328" height="34.4" fill="#454545"/>
<rect x="1210.4" y="444.2" width="87" height="34.6" fill="#565656"/>
<text x="1222.80" y="466.20" font-size="15" fill="#ffffff" font-weight="bold" textLength="63.80" lengthAdjust="spacingAndGlyphs" >Swatches</text>
<path d="M1511 459H1523.5 M1511 462.6H1523.5 M1511 466.2H1523.5" stroke="#c8c8c8" stroke-width="1.5"/>
<g id="sw1">
<rect x="1221.70" y="489.9" width="20.56" height="20.1" fill="#ffffff" stroke="#2a2a2a" stroke-width=".7"/><rect x="1242.26" y="489.9" width="20.56" height="20.1" fill="#000000" stroke="#2a2a2a" stroke-width=".7"/><rect x="1262.83" y="489.9" width="20.56" height="20.1" fill="#ffffff" stroke="#2a2a2a" stroke-width=".7"/><rect x="1283.39" y="489.9" width="20.56" height="20.1" fill="#3f409e" stroke="#2a2a2a" stroke-width=".7"/><rect x="1303.96" y="489.9" width="20.56" height="20.1" fill="#d8398c" stroke="#2a2a2a" stroke-width=".7"/><rect x="1324.52" y="489.9" width="20.56" height="20.1" fill="#ee3a43" stroke="#2a2a2a" stroke-width=".7"/><rect x="1345.08" y="489.9" width="20.56" height="20.1" fill="#d41c29" stroke="#2a2a2a" stroke-width=".7"/><rect x="1365.65" y="489.9" width="20.56" height="20.1" fill="#fbd530" stroke="#2a2a2a" stroke-width=".7"/><rect x="1386.21" y="489.9" width="20.56" height="20.1" fill="#279fd9" stroke="#2a2a2a" stroke-width=".7"/><rect x="1406.78" y="489.9" width="20.56" height="20.1" fill="#fde838" stroke="#2a2a2a" stroke-width=".7"/><rect x="1427.34" y="489.9" width="20.56" height="20.1" fill="#3c6cc8" stroke="#2a2a2a" stroke-width=".7"/><rect x="1447.90" y="489.9" width="20.56" height="20.1" fill="#6a4b96" stroke="#2a2a2a" stroke-width=".7"/><rect x="1468.47" y="489.9" width="20.56" height="20.1" fill="#bf3138" stroke="#2a2a2a" stroke-width=".7"/><rect x="1489.03" y="489.9" width="20.56" height="20.1" fill="#414141" stroke="#2a2a2a" stroke-width=".7"/>
<rect x="1221.70" y="511.3" width="20.99" height="19.5" fill="#b91a28" stroke="#2a2a2a" stroke-width=".7"/><rect x="1242.69" y="511.3" width="20.99" height="19.5" fill="#f2a324" stroke="#2a2a2a" stroke-width=".7"/><rect x="1263.68" y="511.3" width="20.99" height="19.5" fill="#4aa03a" stroke="#2a2a2a" stroke-width=".7"/><rect x="1284.67" y="511.3" width="20.99" height="19.5" fill="#0f9848" stroke="#2a2a2a" stroke-width=".7"/><rect x="1305.66" y="511.3" width="20.99" height="19.5" fill="#0f97d8" stroke="#2a2a2a" stroke-width=".7"/><rect x="1326.65" y="511.3" width="20.99" height="19.5" fill="#9a41a9" stroke="#2a2a2a" stroke-width=".7"/><rect x="1347.64" y="511.3" width="20.99" height="19.5" fill="#2a2e35" stroke="#2a2a2a" stroke-width=".7"/>
<rect x="1221.70" y="542.3" width="17.20" height="15.7" fill="#ffffff"/><rect x="1240.00" y="542.3" width="5.70" height="15.7" fill="#4a4a4a"/><rect x="1245.70" y="542.3" width="19.30" height="15.7" fill="#5ea43a"/><rect x="1265.00" y="542.3" width="18.20" height="15.7" fill="#4c7440"/><rect x="1283.80" y="542.3" width="17.60" height="15.7" fill="#93a590"/><rect x="1302.00" y="542.3" width="17.60" height="15.7" fill="#a9c2a2"/><rect x="1321.00" y="542.3" width="17.40" height="15.7" fill="#a3a7a5"/><rect x="1339.20" y="542.3" width="17.40" height="15.7" fill="#adb1b1"/><rect x="1357.90" y="542.3" width="17.30" height="15.7" fill="#d3d8d8"/><rect x="1375.70" y="542.3" width="101.00" height="15.7" fill="#ededed"/>
</g>
<path d="M1216 575.8H1524" stroke="#5e5e5e" stroke-width="1"/>
<g id="sw1foot" fill="#cfcfcf">
<rect x="1221.6" y="586.6" width="3.2" height="8"/><rect x="1226.4" y="583.2" width="3.4" height="11.4"/><rect x="1231.4" y="585.6" width="3.2" height="9"/>
<path d="M1258.4 586.6 H1262.6 L1267.6 582.6 V595.4 L1262.6 591.4 H1258.4Z"/><path d="M1267 583.5 C1270 583.5 1270.5 585 1270.5 585" stroke="#cfcfcf" fill="none"/><rect x="1273.6" y="592.6" width="3.4" height="2.6"/>
<path d="M1291.8 595.2 C1287 591.4 1284.6 588.8 1284.8 586 C1285 583.4 1287 582.2 1288.6 582.2 C1290.2 582.2 1291.2 583 1291.8 584.2 C1292.4 583 1293.4 582.2 1295 582.2 C1296.6 582.2 1298.6 583.4 1298.8 586 C1299 588.8 1296.6 591.4 1291.8 595.2Z"/>
<path d="M1388.6 582.8 H1395 L1396.6 585 H1404.6 V595.2 H1388.6Z"/><path d="M1390.4 588.4H1403" stroke="#535353" stroke-width="1.2"/>
<rect x="1420.4" y="583" width="10" height="8.4"/><rect x="1425.4" y="586.4" width="10.4" height="9" stroke="#535353" stroke-width=".8"/>
<rect x="1453.6" y="583" width="12.4" height="12.4"/><path d="M1458.6 586.6 L1461 589.2 L1458.6 591.8" stroke="#444" stroke-width="1.2" fill="none"/>
<path d="M1485.8 585.6 H1496.4 L1495.6 595.6 H1486.6Z" fill="none" stroke="#cfcfcf" stroke-width="1.3"/><path d="M1484.8 584.4H1497.4 M1489 582.8H1493" stroke="#cfcfcf" stroke-width="1.3"/><path d="M1489 587.6V594 M1491.1 587.6V594 M1493.2 587.6V594" stroke="#cfcfcf" stroke-width=".8"/>
</g>
<!-- strip 2 -->
<rect x="1208" y="600" width="328" height="8.4" fill="#474747"/><rect x="1208" y="599.6" width="328" height="1.2" fill="#404040"/>
<rect x="1513.8" y="603" width="2.4" height="3" fill="#7c7c7c"/><rect x="1519.2" y="603" width="2.4" height="3" fill="#7c7c7c"/>
<!-- swatches 2 -->
<rect x="1208" y="608.2" width="328" height="34.4" fill="#454545"/>
<rect x="1208" y="608.2" width="86.8" height="34.6" fill="#565656"/>
<rect x="1295.4" y="608.8" width="76" height="33.6" fill="#4a4a4a"/>
<path d="M1371.6 609V642" stroke="#3c3c3c" stroke-width="1"/>
<text x="1220.00" y="631.00" font-size="15" fill="#ffffff" font-weight="bold" textLength="64.00" lengthAdjust="spacingAndGlyphs" >Swatches</text>
<text x="1303.80" y="631.00" font-size="15" fill="#b4b4b4" textLength="56.90" lengthAdjust="spacingAndGlyphs" >Swatches</text>
<path d="M1511 623H1523.5 M1511 626.6H1523.5 M1511 630.2H1523.5" stroke="#c8c8c8" stroke-width="1.5"/>
<g id="sw2">
<rect x="1214.4" y="652" width="25.2" height="22.8" fill="#ffffff" stroke="#333" stroke-width="1.1"/><rect x="1249.2" y="652" width="24.4" height="22.8" fill="#3b3b3b" stroke="#676767" stroke-width="1.1"/><rect x="1281.8" y="652" width="25.0" height="22.8" fill="#8b8b8b" stroke="#5e5e5e" stroke-width="1.1"/><rect x="1315.8" y="652" width="25.0" height="22.8" fill="#a99b82" stroke="#3e3a34" stroke-width="1.1"/><rect x="1349.7" y="652" width="24.8" height="22.8" fill="#b4b4b4" stroke="#444" stroke-width="1.1"/><rect x="1381.9" y="652" width="24.8" height="22.8" fill="#7b7b7b" stroke="#444" stroke-width="1.1"/><rect x="1413.5" y="652" width="26.5" height="22.8" fill="#414350" stroke="#5c5c60" stroke-width="1.1"/><rect x="1445.1" y="652" width="26.0" height="22.8" fill="#34363e" stroke="#5a5a5e" stroke-width="1.1"/><rect x="1477.3" y="652" width="26.7" height="22.8" fill="#2b2b2b" stroke="#5a5a5a" stroke-width="1.1"/>
<rect x="1506" y="652" width="5" height="22.8" fill="#595959"/>
<rect x="1213.7" y="684.4" width="23.7" height="22.8" fill="#ffffff" stroke="#1e1e1e" stroke-width="1.2"/><rect x="1243.8" y="684.4" width="23.9" height="22.8" fill="#ffffff" stroke="#1e1e1e" stroke-width="1.2"/><rect x="1272.4" y="684.4" width="23.6" height="22.8" fill="#5f5f5f" stroke="#1e1e1e" stroke-width="1.2"/>
</g>
<path d="M1218 984.6H1525.6" stroke="#5e5e5e" stroke-width="1"/>
<g id="pfoot" fill="#cfcfcf">
<path d="M1219.4 995.6 H1229 L1232 998.4 V1003 H1219.4Z"/><path d="M1232 1000 L1238 1004.6 H1232Z" fill="#e4e4e4"/><circle cx="1233.4" cy="1003.4" r="2" fill="#535353"/><circle cx="1233.4" cy="1003.4" r="1" fill="#e4e4e4"/>
<rect x="1391" y="993.6" width="13.6" height="13"/>
<path d="M1421.6 994 H1433.6 V1005 H1421.6Z" fill="none" stroke="#cfcfcf" stroke-width="1.3"/><path d="M1424 997.4H1431.4 M1424 1000H1431.4 M1424 1002.4H1431.4" stroke="#cfcfcf" stroke-width=".9"/><circle cx="1435" cy="1006" r="1.7" fill="none" stroke="#cfcfcf"/>
<path d="M1451 994 H1463 V1005 H1451Z" fill="none" stroke="#cfcfcf" stroke-width="1.3"/><path d="M1453.6 994V1005" stroke="#cfcfcf"/><circle cx="1464.4" cy="1006" r="1.7" fill="none" stroke="#cfcfcf"/>
<path d="M1482.6 993.6 H1496.6 V996.6 H1482.6Z"/><path d="M1484 997.6 H1495.4 V1006.6 H1484Z"/>
</g>
<rect x="1208" y="1019.6" width="328" height="4.4" fill="#474747"/>

</svg>
</div>
<div id="hscrollstrip" class="a" style="left:0;top:984px;width:1136px;height:16px;background:#5e5e5e;border-top:1.4px solid #2e2e2e;border-bottom:1px solid #3e3e3e;box-sizing:border-box"></div>
<div id="status" class="a" style="left:0;top:1000px;width:1159px;height:24px;background:#505050">
<svg style="left:0;top:-1000px" width="1160" height="1024" viewBox="0 0 1160 1024">
<rect x="0" y="1019.6" width="1160" height="4.4" fill="#474747"/>
<path d="M1.5 1003V1019" stroke="#6a6a6a" stroke-width="1" stroke-dasharray="2 2"/>
<rect x="6" y="1001" width="62" height="18.5" rx="1.5" fill="#4b4b4b"/>
<text x="18.30" y="1017.40" font-size="14.8" fill="#f2f2f2" textLength="35.00" lengthAdjust="spacingAndGlyphs" >100%</text>
<rect x="70" y="1001" width="29" height="18.5" rx="2" fill="#474747"/><path d="M77 1008 L84 1013 L91 1008" stroke="#e4e4e4" stroke-width="1.5" fill="none"/>
<rect x="103" y="1001" width="33" height="18.5" rx="2" fill="#4a4a4a"/>
<path d="M112 1011.5 L116 1008.4 V1014.6Z M126 1011.5 L122 1008.4 V1014.6Z" fill="#dadada" opacity=".0"/>
<path d="M111.5 1011.5 L115.5 1008 V1015Z" fill="#d8d8d8"/><path d="M123.6 1008.2V1014.8 M121 1011.5H126.4" stroke="#d8d8d8" stroke-width="1.3"/>
<rect x="138" y="1001" width="32" height="18.5" rx="2" fill="#4d4d4d"/>
<text x="146.50" y="1017.20" font-size="14.5" fill="#ffffff" font-weight="bold" textLength="8.00" lengthAdjust="spacingAndGlyphs" >1</text>
<path d="M184.5 1009.6 L191 1015 L197.5 1009.6" stroke="#f0f0f0" stroke-width="2.6" fill="none"/>
<path d="M211.6 1009 L215.2 1014.6 L218.8 1009Z" fill="#e0e0e0"/>
<path d="M205 1002V1019 M228 1002V1019" stroke="#5c5c5c" stroke-width="1"/>
<g fill="#d6d6d6"><path d="M237.6 1006 H243.4 V1010 H237.6Z M240.6 1010.6 H249 V1016.4 H240.6Z"/><path d="M263 1011 L267 1012.8 L273.6 1006.4 V1016.6 H263Z"/><rect x="263" y="1006" width="5" height="3"/></g>
<rect x="284" y="1001.4" width="295" height="18" fill="#4c4c4c"/>
<text x="405.00" y="1016.60" font-size="14.2" fill="#f2f2f2" textLength="66.70" lengthAdjust="spacingAndGlyphs" >Document</text>
<path d="M586 1006 L594 1010.8 L586 1015.6Z" fill="#ececec"/>
<path d="M615 1006.6 L610.4 1011 L615 1015.4" stroke="#8a8a8a" stroke-width="1.4" fill="none"/>
<rect x="814" y="1001.6" width="41" height="16" rx="8" fill="#5c5c5c"/>
<path d="M1121 1006.6 L1125.6 1011 L1121 1015.4" stroke="#8a8a8a" stroke-width="1.4" fill="none"/>
</svg>
</div>
</body></html>
